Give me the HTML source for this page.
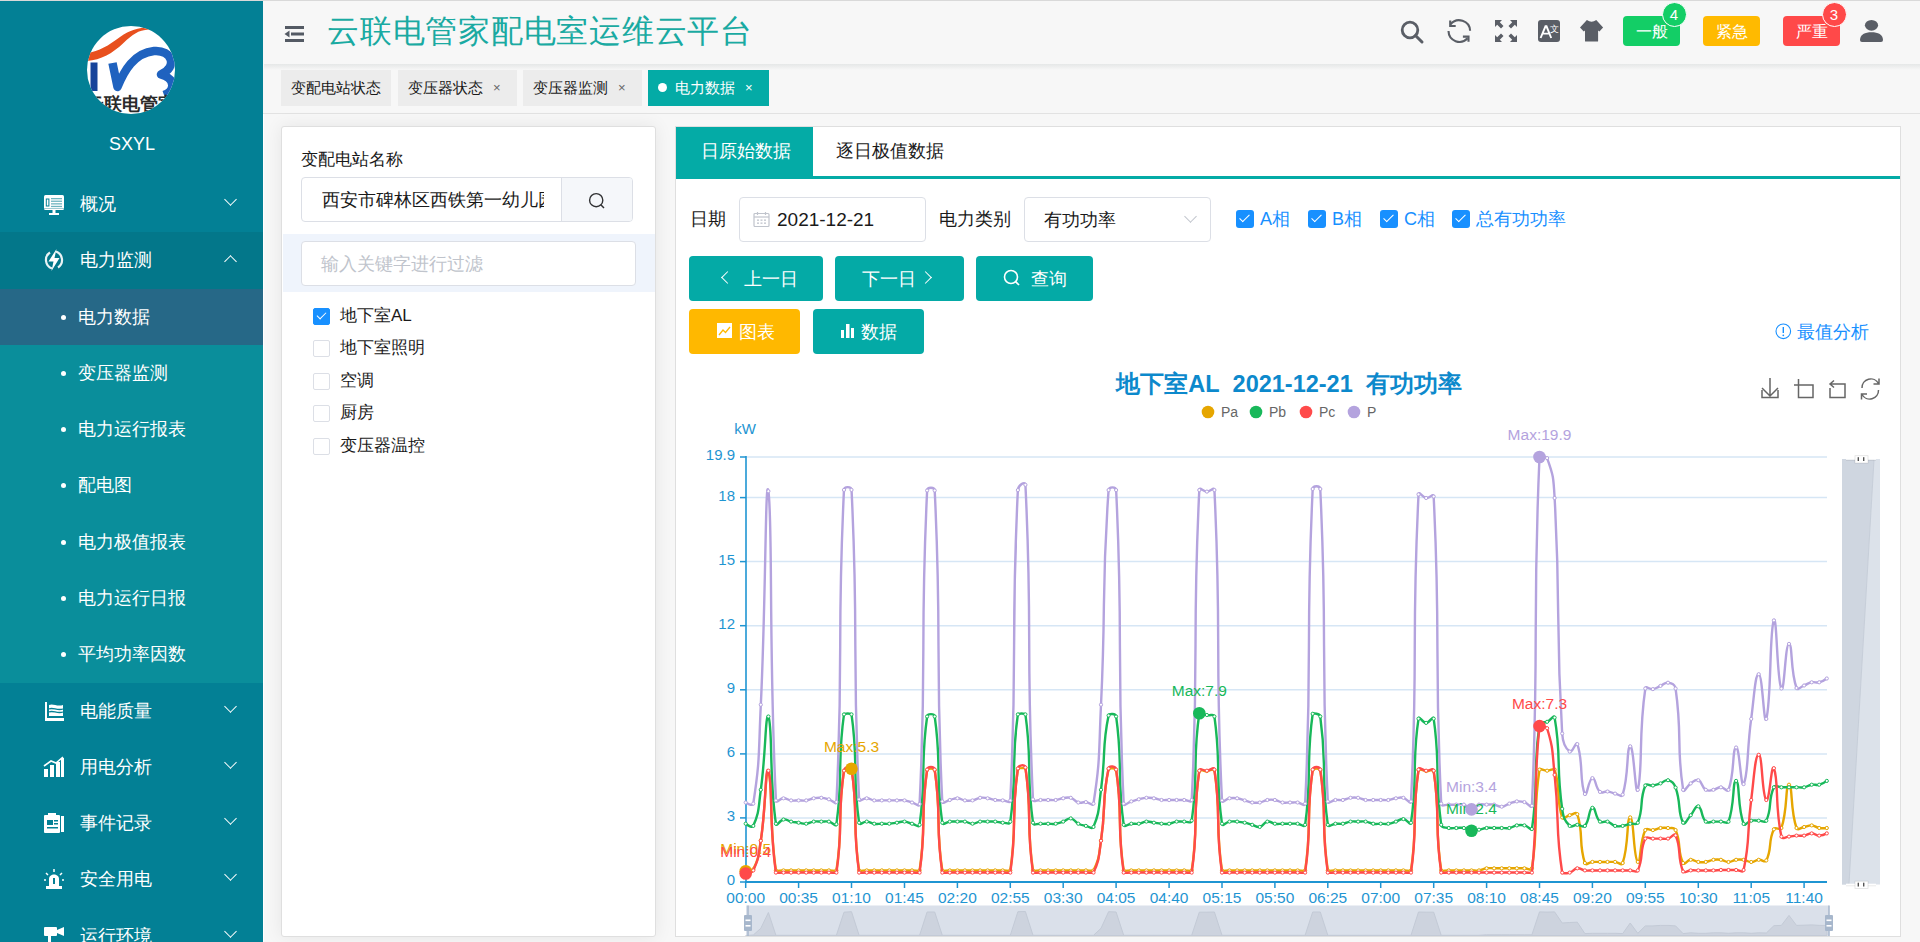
<!DOCTYPE html><html><head><meta charset="utf-8"><style>
*{box-sizing:border-box;margin:0;padding:0}
html,body{width:1920px;height:942px;overflow:hidden}
body{position:relative;background:#f7f7f7;font-family:"Liberation Sans",sans-serif;color:#303133}
.a{position:absolute}
.t{position:absolute;white-space:nowrap;line-height:1}
#side{left:0;top:0;width:263px;height:942px;background:#038095}
.mi{position:absolute;left:0;width:263px;height:56.3px;color:#fff;font-size:18px}
.mi .lbl{position:absolute;left:80px;top:18px;line-height:20px}
.mi .chev{position:absolute;left:226px;top:19px;width:9px;height:9px;border-right:1.8px solid #fff;border-bottom:1.8px solid #fff;transform:rotate(45deg)}
.mi .chev.up{transform:rotate(-135deg);top:25px}
.sub .lbl{left:78px}
.sub .dot{position:absolute;left:61px;top:26px;width:5px;height:5px;border-radius:50%;background:#fff}
#hdr{left:263px;top:0;width:1657px;height:64px;background:#f7f7f7}
#hdrline{left:0;top:0;width:1920px;height:1px;background:#d9d9d9;z-index:5}
#tags{left:263px;top:64px;width:1657px;height:50px;background:#f7f7f7;border-bottom:1px solid #e2e2e2}
#hshadow{left:264px;top:64px;width:1656px;height:6px;background:linear-gradient(#e5e7e7,#f7f7f7)}
.tag{position:absolute;top:5px;height:37px;background:#ececec;font-size:15px;color:#1a1a1a}
.tag .tx{position:absolute;top:10px;line-height:17px}
.tag .x{position:absolute;top:10px;font-size:13px;color:#666;line-height:17px}
.panel{position:absolute;background:#fff;border:1px solid #dfdfdf;border-radius:3px}
.inp{position:absolute;border:1px solid #dcdfe6;border-radius:4px;background:#fff}
.btn{position:absolute;height:45px;border-radius:4px;background:#04aaa6;color:#fff;font-size:18px}
.btn .tx{position:absolute;top:13px;line-height:20px;white-space:nowrap}
.cb{position:absolute;top:210px;width:18px;height:18px;background:#1890ff;border-radius:3px}
.cb:after{content:"";position:absolute;left:6px;top:2px;width:4px;height:9px;border-right:1.6px solid #fff;border-bottom:1.6px solid #fff;transform:rotate(45deg)}
.cbl{position:absolute;top:209px;font-size:18px;color:#1890ff;line-height:20px;white-space:nowrap}
.tcb{position:absolute;left:313px;width:17px;height:17px;border:1px solid #dcdfe6;border-radius:2px;background:#fff}
.tcbl{position:absolute;left:340px;font-size:17px;color:#1a1a1a;line-height:20px;white-space:nowrap}
</style></head><body><div id="side" class="a">
<svg class="a" style="left:86px;top:25px" width="90" height="90" viewBox="0 0 90 90">
<defs><clipPath id="lc"><circle cx="45" cy="45" r="44"/></clipPath></defs>
<circle cx="45" cy="45" r="44" fill="#fff"/>
<g clip-path="url(#lc)">
<path d="M-1 28.5 C 12 27, 22 21, 34 12 C 44 5, 52 2.5, 63 2.5 L 63 4.5 C 52 5, 46 10, 38 17.5 C 26 29, 14 35.5, -1 36 Z" fill="#e8501e"/>
<rect x="4.5" y="37.5" width="7" height="28.5" fill="#17449a"/>
<path d="M26.5 38 L 31.5 62 C 38 46, 48 28, 68 26 C 86 24.5, 92 42, 75 49.5 C 90 54, 89 66, 78 70" fill="none" stroke="#1f62bf" stroke-width="8.5" stroke-linejoin="round"/>
<text x="45" y="85" text-anchor="middle" font-size="18" font-weight="bold" fill="#2a2a2a">云联电管家</text>
</g></svg>
<div class="t" style="left:109px;top:135px;font-size:18px;color:#fff">SXYL</div>
<div class="mi" style="top:176px;"><svg class="a" style="left:43px;top:18px" width="22" height="22" viewBox="0 0 22 22"><rect x="1" y="1" width="20" height="15" rx="1.5" fill="#fff"/><rect x="3.3" y="5" width="2.6" height="7" fill="none" stroke="#038095" stroke-width="1"/><g fill="#6fb5c0"><rect x="8" y="4" width="11" height="1.3"/><rect x="8" y="6.6" width="11" height="1.3"/><rect x="8" y="9.2" width="11" height="1.3"/><rect x="8" y="11.8" width="11" height="1.3"/></g><rect x="1" y="14" width="20" height="1" fill="#9fcbd2"/><rect x="9.5" y="16" width="3" height="3" fill="#fff"/><rect x="6" y="19" width="10" height="2" fill="#fff"/></svg><span class="lbl">概况</span><i class="chev"></i></div>
<div class="mi" style="top:232.28px;background:#03778a;"><svg class="a" style="left:43px;top:16px" width="22" height="24" viewBox="0 0 22 24"><path d="M7 4.5 A 9 9 0 0 0 9 20.5 M15 19.5 A 9 9 0 0 0 13 3.5" fill="none" stroke="#e9f3f5" stroke-width="2.2"/><path d="M13.5 1 L5.5 13.5 L10.5 13.5 L8.5 23 L16.5 10 L11.5 10 Z" fill="#fff"/></svg><span class="lbl">电力监测</span><i class="chev up"></i></div>
<div class="a" style="left:0;top:288.56px;width:263px;height:393.96px;background:#0a8e9b"></div>
<div class="mi sub" style="top:288.56px;background:#266887;"><i class="dot"></i><span class="lbl">电力数据</span></div>
<div class="mi sub" style="top:344.84px;"><i class="dot"></i><span class="lbl">变压器监测</span></div>
<div class="mi sub" style="top:401.12px;"><i class="dot"></i><span class="lbl">电力运行报表</span></div>
<div class="mi sub" style="top:457.40px;"><i class="dot"></i><span class="lbl">配电图</span></div>
<div class="mi sub" style="top:513.68px;"><i class="dot"></i><span class="lbl">电力极值报表</span></div>
<div class="mi sub" style="top:569.96px;"><i class="dot"></i><span class="lbl">电力运行日报</span></div>
<div class="mi sub" style="top:626.24px;"><i class="dot"></i><span class="lbl">平均功率因数</span></div>
<div class="mi" style="top:682.52px;"><svg class="a" style="left:43px;top:17px" width="22" height="22" viewBox="0 0 22 22"><path d="M2 2 L4 2 L4 18 L21 18 L21 21 L2 21 Z" fill="#fff"/><path d="M6 5 C 10 3, 14 7, 20 5 L 20 16 L 6 16 Z" fill="#fff"/><path d="M6 9 C 10 7, 14 11, 20 9 M6 12 C 10 10, 14 14, 20 12" stroke="#038095" stroke-width="1.3" fill="none"/></svg><span class="lbl">电能质量</span><i class="chev"></i></div>
<div class="mi" style="top:738.80px;"><svg class="a" style="left:43px;top:17px" width="22" height="22" viewBox="0 0 22 22"><rect x="1" y="13" width="4" height="8" fill="#fff"/><rect x="7" y="9" width="4" height="12" fill="#fff"/><rect x="13" y="6" width="4" height="15" fill="#fff"/><rect x="18" y="2" width="3" height="19" fill="#fff"/><path d="M1 10 L8 5 L13 7 L20 1" stroke="#fff" stroke-width="1.6" fill="none"/></svg><span class="lbl">用电分析</span><i class="chev"></i></div>
<div class="mi" style="top:795.08px;"><svg class="a" style="left:43px;top:17px" width="22" height="22" viewBox="0 0 22 22"><rect x="1" y="3" width="16" height="18" rx="1" fill="#fff"/><rect x="5" y="1" width="8" height="4" fill="#fff"/><rect x="4" y="8" width="6" height="5" fill="#038095"/><rect x="11" y="8" width="4" height="1.5" fill="#038095"/><rect x="11" y="11" width="4" height="1.5" fill="#038095"/><rect x="4" y="15" width="11" height="1.5" fill="#038095"/><rect x="18" y="4" width="3" height="16" fill="#fff"/></svg><span class="lbl">事件记录</span><i class="chev"></i></div>
<div class="mi" style="top:851.36px;"><svg class="a" style="left:43px;top:17px" width="22" height="22" viewBox="0 0 22 22"><path d="M6 18 L6 11 C 6 5, 16 5, 16 11 L16 18 Z" fill="#fff"/><rect x="3" y="18" width="16" height="3" fill="#fff"/><path d="M10 10 L12 10 L12 16 L10 16Z" fill="#038095"/><path d="M11 1 L11 4 M3 5 L5 7 M19 5 L17 7 M1 12 L3 12 M19 12 L21 12" stroke="#fff" stroke-width="1.5"/></svg><span class="lbl">安全用电</span><i class="chev"></i></div>
<div class="mi" style="top:907.64px;"><svg class="a" style="left:43px;top:17px" width="22" height="22" viewBox="0 0 22 22"><rect x="1" y="2" width="13" height="9" rx="1" fill="#fff"/><path d="M14 5 L21 2 L21 11 L14 8 Z" fill="#fff"/><rect x="5" y="11" width="3" height="10" fill="#fff"/></svg><span class="lbl">运行环境</span><i class="chev"></i></div>
</div>
<div class="a" style="left:263px;top:0;width:1px;height:942px;background:#fff"></div>
<div id="hdr" class="a">
<svg class="a" style="left:21px;top:25px" width="21" height="18" viewBox="0 0 21 18"><rect x="1" y="1" width="19" height="3" fill="#545a64"/><rect x="7" y="7.5" width="13" height="3" fill="#545a64"/><path d="M0.5 9 L5.5 5.5 L5.5 12.5 Z" fill="#545a64"/><rect x="1" y="14" width="19" height="3" fill="#545a64"/></svg>
<div class="t" style="left:64px;top:15px;font-size:32px;color:#1aaaa2;letter-spacing:0.75px">云联电管家配电室运维云平台</div>
<svg class="a" style="left:1137px;top:20px" width="25" height="25" viewBox="0 0 25 25"><circle cx="10" cy="10" r="7.8" fill="none" stroke="#5a5e66" stroke-width="2.8"/><path d="M15.5 15.5 L22 22" stroke="#5a5e66" stroke-width="3" stroke-linecap="round"/></svg>
<svg class="a" style="left:1177px;top:12px" width="40" height="40" viewBox="0 0 40 40"><g fill="none" stroke="#5a5e66" stroke-width="2.1"><path d="M10.6 12.3 A 11 11 0 0 1 30.1 18.7"/><path d="M10.2 8.5 V14 H15.7"/><path d="M8.5 19.1 A 11 11 0 0 0 27.6 26.3"/><path d="M22.9 24.6 H28.5 V29.7"/></g></svg>
<svg class="a" style="left:1231px;top:19px" width="24" height="24" viewBox="0 0 24 24"><g fill="#5a5e66"><path d="M1 1 L8 1 L5.8 3.2 L9.5 7 L7 9.5 L3.2 5.8 L1 8Z"/><path d="M23 1 L16 1 L18.2 3.2 L14.5 7 L17 9.5 L20.8 5.8 L23 8Z"/><path d="M1 23 L8 23 L5.8 20.8 L9.5 17 L7 14.5 L3.2 18.2 L1 16Z"/><path d="M23 23 L16 23 L18.2 20.8 L14.5 17 L17 14.5 L20.8 18.2 L23 16Z"/></g></svg>
<svg class="a" style="left:1275px;top:20px" width="23" height="23" viewBox="0 0 23 23"><rect x="0" y="0" width="22" height="22" rx="3" fill="#5a5e66"/><path d="M2.6 18 L7.5 6.3 L8.5 6.3 L13.2 18 M4.6 13.6 L11.4 13.6" fill="none" stroke="#fff" stroke-width="1.9"/><text x="12.3" y="11.8" font-size="8.5" fill="#fff">文</text></svg>
<svg class="a" style="left:1316px;top:19px" width="25" height="24" viewBox="0 0 25 24"><path d="M7.9 0.9 Q12.6 4.5 17.25 0.9 L24.1 8.4 L20.4 12.5 L19.1 11.5 L19.1 22 Q19.1 22.5 18.6 22.5 L6.5 22.5 Q6 22.5 6 22 L6 11.5 L4.75 12.5 L1 8.4 Z" fill="#5a5e66"/></svg>
<div class="a" style="left:1360px;top:16px;width:57px;height:30px;border-radius:4px;background:#13ce66"><div class="t" style="left:0;width:57px;text-align:center;top:7px;font-size:16px;line-height:18px;color:#fff">一般</div></div>
<div class="a" style="left:1399px;top:2px;width:25px;height:25px;border-radius:50%;background:#13ce66;border:1.5px solid #fff"><div class="t" style="left:0;width:22px;text-align:center;top:3px;font-size:15px;line-height:17px;color:#fff">4</div></div>
<div class="a" style="left:1440px;top:16px;width:57px;height:30px;border-radius:4px;background:#ffba00"><div class="t" style="left:0;width:57px;text-align:center;top:7px;font-size:16px;line-height:18px;color:#fff">紧急</div></div>
<div class="a" style="left:1520px;top:16px;width:57px;height:30px;border-radius:4px;background:#ff4949"><div class="t" style="left:0;width:57px;text-align:center;top:7px;font-size:16px;line-height:18px;color:#fff">严重</div></div>
<div class="a" style="left:1559px;top:2px;width:25px;height:25px;border-radius:50%;background:#ff4949;border:1.5px solid #fff"><div class="t" style="left:0;width:22px;text-align:center;top:3px;font-size:15px;line-height:17px;color:#fff">3</div></div>
<svg class="a" style="left:1596px;top:19px" width="25" height="24" viewBox="0 0 25 24"><ellipse cx="12.5" cy="6.3" rx="6.6" ry="5.4" fill="#5a5e66"/><path d="M1 21 C 1 15.5, 6 13.2, 12.5 13.2 C 19 13.2, 24 15.5, 24 21 Q 24 23 22 23 L 3 23 Q 1 23 1 21 Z" fill="#5a5e66"/></svg>
</div>
<div id="hdrline" class="a"></div>
<div id="tags" class="a">
<div class="tag" style="left:18px;width:110px"><span class="tx" style="left:10px">变配电站状态</span></div>
<div class="tag" style="left:135px;width:119px"><span class="tx" style="left:10px">变压器状态</span><span class="x" style="left:95px">×</span></div>
<div class="tag" style="left:260px;width:119px"><span class="tx" style="left:10px">变压器监测</span><span class="x" style="left:95px">×</span></div>
<div class="tag" style="left:385px;width:121px;background:#04aba6;color:#fff"><i class="a" style="left:10px;top:14px;width:9px;height:9px;border-radius:50%;background:#fff"></i><span class="tx" style="left:27px">电力数据</span><span class="x" style="left:97px;color:#fff">×</span></div>
</div>
<div id="hshadow" class="a"></div>
<div class="panel" style="left:281px;top:126px;width:375px;height:811px;box-shadow:0 0 18px rgba(0,0,0,.075)"></div>
<div class="t" style="left:301px;top:150px;font-size:17px;line-height:20px;color:#1a1a1a">变配电站名称</div>
<div class="inp" style="left:301px;top:177px;width:332px;height:45px;overflow:hidden"><div class="t" style="left:20px;top:12px;font-size:18px;line-height:20px;color:#1a1a1a;width:222px;overflow:hidden">西安市碑林区西铁第一幼儿园</div><div class="a" style="left:259px;top:0;width:72px;height:43px;background:#f5f7fa;border-left:1px solid #dcdfe6"></div><svg class="a" style="left:286px;top:14px" width="18" height="18" viewBox="0 0 18 18"><circle cx="8.2" cy="8.2" r="6.6" fill="none" stroke="#303133" stroke-width="1.4"/><path d="M12.8 12.8 L16 16" stroke="#303133" stroke-width="1.5"/></svg></div>
<div class="a" style="left:283px;top:234px;width:372px;height:58px;background:#eff4fc"></div>
<div class="inp" style="left:301px;top:241px;width:335px;height:45px"><div class="t" style="left:19px;top:12px;font-size:18px;line-height:20px;color:#c0c4cc">输入关键字进行过滤</div></div>
<div class="tcb" style="top:307.5px;background:#1890ff;border-color:#1890ff"><i class="a" style="left:5px;top:1.5px;width:5px;height:9px;border-right:1.5px solid #fff;border-bottom:1.5px solid #fff;transform:rotate(45deg)"></i></div>
<div class="tcbl" style="top:305.5px">地下室AL</div>
<div class="tcb" style="top:340.0px"></div>
<div class="tcbl" style="top:338.0px">地下室照明</div>
<div class="tcb" style="top:372.5px"></div>
<div class="tcbl" style="top:370.5px">空调</div>
<div class="tcb" style="top:405.0px"></div>
<div class="tcbl" style="top:403.0px">厨房</div>
<div class="tcb" style="top:437.5px"></div>
<div class="tcbl" style="top:435.5px">变压器温控</div>
<div class="panel" style="left:675px;top:126px;width:1226px;height:811px;border-radius:0"></div>
<div class="a" style="left:676px;top:127px;width:137px;height:50px;background:#04aba6"></div>
<div class="a" style="left:676px;top:176px;width:1224px;height:3px;background:#04aba6"></div>
<div class="t" style="left:701px;top:141px;font-size:18px;line-height:20px;color:#fff">日原始数据</div>
<div class="t" style="left:836px;top:141px;font-size:18px;line-height:20px;color:#1a1a1a">逐日极值数据</div>
<div class="t" style="left:690px;top:209px;font-size:18px;line-height:20px;color:#1a1a1a">日期</div>
<div class="inp" style="left:739px;top:197px;width:187px;height:45px"><svg class="a" style="left:13px;top:13px" width="17" height="17" viewBox="0 0 17 17"><rect x="1" y="2.5" width="15" height="13" rx="1" fill="none" stroke="#c0c4cc" stroke-width="1.2"/><path d="M1 6 L16 6" stroke="#c0c4cc" stroke-width="1.2"/><path d="M4.5 1 V4 M12.5 1 V4" stroke="#c0c4cc" stroke-width="1.2"/><g fill="#c0c4cc"><rect x="4" y="8.5" width="2" height="1.3"/><rect x="7.5" y="8.5" width="2" height="1.3"/><rect x="11" y="8.5" width="2" height="1.3"/><rect x="4" y="11.5" width="2" height="1.3"/><rect x="7.5" y="11.5" width="2" height="1.3"/><rect x="11" y="11.5" width="2" height="1.3"/></g></svg><div class="t" style="left:37px;top:11px;font-size:19px;line-height:22px;color:#1a1a1a">2021-12-21</div></div>
<div class="t" style="left:939px;top:209px;font-size:18px;line-height:20px;color:#1a1a1a">电力类别</div>
<div class="inp" style="left:1024px;top:197px;width:187px;height:45px"><div class="t" style="left:19px;top:12px;font-size:18px;line-height:20px;color:#1a1a1a">有功功率</div><i class="a" style="left:161px;top:14px;width:9px;height:9px;border-right:1.2px solid #c0c4cc;border-bottom:1.2px solid #c0c4cc;transform:rotate(45deg)"></i></div>
<div class="cb" style="left:1236px"></div><div class="cbl" style="left:1260px">A相</div>
<div class="cb" style="left:1308px"></div><div class="cbl" style="left:1332px">B相</div>
<div class="cb" style="left:1380px"></div><div class="cbl" style="left:1404px">C相</div>
<div class="cb" style="left:1452px"></div><div class="cbl" style="left:1476px">总有功功率</div>
<div class="btn" style="left:689px;top:256px;width:134px"><i class="a" style="left:34px;top:17px;width:9px;height:9px;border-left:1.6px solid #fff;border-bottom:1.6px solid #fff;transform:rotate(45deg)"></i><span class="tx" style="left:55px">上一日</span></div>
<div class="btn" style="left:835px;top:256px;width:129px"><span class="tx" style="left:27px">下一日</span><i class="a" style="left:86px;top:17px;width:9px;height:9px;border-right:1.6px solid #fff;border-top:1.6px solid #fff;transform:rotate(45deg)"></i></div>
<div class="btn" style="left:976px;top:256px;width:117px"><svg class="a" style="left:27px;top:13px" width="18" height="18" viewBox="0 0 18 18"><circle cx="8" cy="8" r="6.5" fill="none" stroke="#fff" stroke-width="1.6"/><path d="M12.6 12.6 L16 16" stroke="#fff" stroke-width="1.7"/></svg><span class="tx" style="left:55px">查询</span></div>
<div class="btn" style="left:689px;top:309px;width:111px;background:#ffb800"><svg class="a" style="left:28px;top:14px" width="16" height="16" viewBox="0 0 16 16"><rect x="0" y="0" width="15" height="15" fill="#fff"/><path d="M2 12 L6 7 L8.5 9.5 L13 4" stroke="#ffb800" stroke-width="1.3" fill="none"/></svg><span class="tx" style="left:50px">图表</span></div>
<div class="btn" style="left:813px;top:309px;width:111px"><svg class="a" style="left:27px;top:14px" width="16" height="16" viewBox="0 0 16 16"><rect x="1" y="7" width="3" height="8" fill="#fff"/><rect x="6" y="1" width="3.5" height="14" fill="#fff"/><rect x="11" y="5" width="3" height="10" fill="#fff"/></svg><span class="tx" style="left:48px">数据</span></div>
<svg class="a" style="left:1775px;top:323px" width="17" height="17" viewBox="0 0 17 17"><circle cx="8.3" cy="8.3" r="7.3" fill="none" stroke="#1890ff" stroke-width="1.1"/><path d="M8.3 4 V10" stroke="#1890ff" stroke-width="1.4"/><circle cx="8.3" cy="12.3" r="0.9" fill="#1890ff"/></svg>
<div class="t" style="left:1797px;top:322px;font-size:18px;line-height:20px;color:#1890ff">最值分析</div>
<svg class="a" style="left:0;top:0" width="1920" height="942" viewBox="0 0 1920 942"><text x="1289" y="392" text-anchor="middle" font-size="23.5" font-weight="bold" fill="#0c89cc" font-family="Liberation Sans">地下室AL&#160;&#160;2021-12-21&#160;&#160;有功功率</text><circle cx="1208" cy="412" r="6.3" fill="#e6a600"/><text x="1221" y="417" font-size="14" fill="#666" font-family="Liberation Sans">Pa</text><circle cx="1256" cy="412" r="6.3" fill="#18b85a"/><text x="1269" y="417" font-size="14" fill="#666" font-family="Liberation Sans">Pb</text><circle cx="1306" cy="412" r="6.3" fill="#ff4a4a"/><text x="1319" y="417" font-size="14" fill="#666" font-family="Liberation Sans">Pc</text><circle cx="1354" cy="412" r="6.3" fill="#b4a3de"/><text x="1367" y="417" font-size="14" fill="#666" font-family="Liberation Sans">P</text><g fill="none" stroke="#666" stroke-width="1.5"><path d="M1770 378 V396 M1762 388 L1770 396 L1778 388 M1762 390 V397.5 H1778 V390"/><path d="M1794 385 H1813 V397.5 H1798.5 V379"/><path d="M1831 384 H1845 V397.5 H1830 V388 M1834 380.5 L1830 384 L1834 387.5"/><path d="M1862 388 A 8.8 8.8 0 0 1 1878.5 383.5 M1878.5 390 A 8.8 8.8 0 0 1 1862 394.5 M1879 378.5 V384 H1873.5 M1861.5 399.5 V394 H1867"/></g><line x1="746" y1="817.9" x2="1827" y2="817.9" stroke="#d6e6f5" stroke-width="1.5"/><line x1="746" y1="753.9" x2="1827" y2="753.9" stroke="#d6e6f5" stroke-width="1.5"/><line x1="746" y1="689.8" x2="1827" y2="689.8" stroke="#d6e6f5" stroke-width="1.5"/><line x1="746" y1="625.7" x2="1827" y2="625.7" stroke="#d6e6f5" stroke-width="1.5"/><line x1="746" y1="561.6" x2="1827" y2="561.6" stroke="#d6e6f5" stroke-width="1.5"/><line x1="746" y1="497.6" x2="1827" y2="497.6" stroke="#d6e6f5" stroke-width="1.5"/><line x1="746" y1="457.0" x2="1827" y2="457.0" stroke="#d6e6f5" stroke-width="1.5"/><line x1="746" y1="456" x2="746" y2="883" stroke="#1f95d2" stroke-width="1.6"/><line x1="740" y1="882.0" x2="746" y2="882.0" stroke="#1f95d2" stroke-width="1.5"/><text x="735" y="885.0" text-anchor="end" font-size="15" fill="#1f95d2" font-family="Liberation Sans">0</text><line x1="740" y1="817.9" x2="746" y2="817.9" stroke="#1f95d2" stroke-width="1.5"/><text x="735" y="820.9" text-anchor="end" font-size="15" fill="#1f95d2" font-family="Liberation Sans">3</text><line x1="740" y1="753.9" x2="746" y2="753.9" stroke="#1f95d2" stroke-width="1.5"/><text x="735" y="756.9" text-anchor="end" font-size="15" fill="#1f95d2" font-family="Liberation Sans">6</text><line x1="740" y1="689.8" x2="746" y2="689.8" stroke="#1f95d2" stroke-width="1.5"/><text x="735" y="692.8" text-anchor="end" font-size="15" fill="#1f95d2" font-family="Liberation Sans">9</text><line x1="740" y1="625.7" x2="746" y2="625.7" stroke="#1f95d2" stroke-width="1.5"/><text x="735" y="628.7" text-anchor="end" font-size="15" fill="#1f95d2" font-family="Liberation Sans">12</text><line x1="740" y1="561.6" x2="746" y2="561.6" stroke="#1f95d2" stroke-width="1.5"/><text x="735" y="564.6" text-anchor="end" font-size="15" fill="#1f95d2" font-family="Liberation Sans">15</text><line x1="740" y1="497.6" x2="746" y2="497.6" stroke="#1f95d2" stroke-width="1.5"/><text x="735" y="500.6" text-anchor="end" font-size="15" fill="#1f95d2" font-family="Liberation Sans">18</text><line x1="740" y1="457.0" x2="746" y2="457.0" stroke="#1f95d2" stroke-width="1.5"/><text x="735" y="460.0" text-anchor="end" font-size="15" fill="#1f95d2" font-family="Liberation Sans">19.9</text><text x="745" y="434" text-anchor="middle" font-size="15" fill="#1f95d2" font-family="Liberation Sans">kW</text><line x1="745" y1="882" x2="1827" y2="882" stroke="#1f95d2" stroke-width="2"/><line x1="745.7" y1="882" x2="745.7" y2="888" stroke="#1f95d2" stroke-width="1.5"/><text x="745.7" y="903" text-anchor="middle" font-size="15.5" fill="#1f95d2" font-family="Liberation Sans">00:00</text><line x1="798.6" y1="882" x2="798.6" y2="888" stroke="#1f95d2" stroke-width="1.5"/><text x="798.6" y="903" text-anchor="middle" font-size="15.5" fill="#1f95d2" font-family="Liberation Sans">00:35</text><line x1="851.5" y1="882" x2="851.5" y2="888" stroke="#1f95d2" stroke-width="1.5"/><text x="851.5" y="903" text-anchor="middle" font-size="15.5" fill="#1f95d2" font-family="Liberation Sans">01:10</text><line x1="904.5" y1="882" x2="904.5" y2="888" stroke="#1f95d2" stroke-width="1.5"/><text x="904.5" y="903" text-anchor="middle" font-size="15.5" fill="#1f95d2" font-family="Liberation Sans">01:45</text><line x1="957.4" y1="882" x2="957.4" y2="888" stroke="#1f95d2" stroke-width="1.5"/><text x="957.4" y="903" text-anchor="middle" font-size="15.5" fill="#1f95d2" font-family="Liberation Sans">02:20</text><line x1="1010.3" y1="882" x2="1010.3" y2="888" stroke="#1f95d2" stroke-width="1.5"/><text x="1010.3" y="903" text-anchor="middle" font-size="15.5" fill="#1f95d2" font-family="Liberation Sans">02:55</text><line x1="1063.2" y1="882" x2="1063.2" y2="888" stroke="#1f95d2" stroke-width="1.5"/><text x="1063.2" y="903" text-anchor="middle" font-size="15.5" fill="#1f95d2" font-family="Liberation Sans">03:30</text><line x1="1116.1" y1="882" x2="1116.1" y2="888" stroke="#1f95d2" stroke-width="1.5"/><text x="1116.1" y="903" text-anchor="middle" font-size="15.5" fill="#1f95d2" font-family="Liberation Sans">04:05</text><line x1="1169.1" y1="882" x2="1169.1" y2="888" stroke="#1f95d2" stroke-width="1.5"/><text x="1169.1" y="903" text-anchor="middle" font-size="15.5" fill="#1f95d2" font-family="Liberation Sans">04:40</text><line x1="1222.0" y1="882" x2="1222.0" y2="888" stroke="#1f95d2" stroke-width="1.5"/><text x="1222.0" y="903" text-anchor="middle" font-size="15.5" fill="#1f95d2" font-family="Liberation Sans">05:15</text><line x1="1274.9" y1="882" x2="1274.9" y2="888" stroke="#1f95d2" stroke-width="1.5"/><text x="1274.9" y="903" text-anchor="middle" font-size="15.5" fill="#1f95d2" font-family="Liberation Sans">05:50</text><line x1="1327.8" y1="882" x2="1327.8" y2="888" stroke="#1f95d2" stroke-width="1.5"/><text x="1327.8" y="903" text-anchor="middle" font-size="15.5" fill="#1f95d2" font-family="Liberation Sans">06:25</text><line x1="1380.7" y1="882" x2="1380.7" y2="888" stroke="#1f95d2" stroke-width="1.5"/><text x="1380.7" y="903" text-anchor="middle" font-size="15.5" fill="#1f95d2" font-family="Liberation Sans">07:00</text><line x1="1433.7" y1="882" x2="1433.7" y2="888" stroke="#1f95d2" stroke-width="1.5"/><text x="1433.7" y="903" text-anchor="middle" font-size="15.5" fill="#1f95d2" font-family="Liberation Sans">07:35</text><line x1="1486.6" y1="882" x2="1486.6" y2="888" stroke="#1f95d2" stroke-width="1.5"/><text x="1486.6" y="903" text-anchor="middle" font-size="15.5" fill="#1f95d2" font-family="Liberation Sans">08:10</text><line x1="1539.5" y1="882" x2="1539.5" y2="888" stroke="#1f95d2" stroke-width="1.5"/><text x="1539.5" y="903" text-anchor="middle" font-size="15.5" fill="#1f95d2" font-family="Liberation Sans">08:45</text><line x1="1592.4" y1="882" x2="1592.4" y2="888" stroke="#1f95d2" stroke-width="1.5"/><text x="1592.4" y="903" text-anchor="middle" font-size="15.5" fill="#1f95d2" font-family="Liberation Sans">09:20</text><line x1="1645.3" y1="882" x2="1645.3" y2="888" stroke="#1f95d2" stroke-width="1.5"/><text x="1645.3" y="903" text-anchor="middle" font-size="15.5" fill="#1f95d2" font-family="Liberation Sans">09:55</text><line x1="1698.3" y1="882" x2="1698.3" y2="888" stroke="#1f95d2" stroke-width="1.5"/><text x="1698.3" y="903" text-anchor="middle" font-size="15.5" fill="#1f95d2" font-family="Liberation Sans">10:30</text><line x1="1751.2" y1="882" x2="1751.2" y2="888" stroke="#1f95d2" stroke-width="1.5"/><text x="1751.2" y="903" text-anchor="middle" font-size="15.5" fill="#1f95d2" font-family="Liberation Sans">11:05</text><line x1="1804.1" y1="882" x2="1804.1" y2="888" stroke="#1f95d2" stroke-width="1.5"/><text x="1804.1" y="903" text-anchor="middle" font-size="15.5" fill="#1f95d2" font-family="Liberation Sans">11:40</text><path d="M745.70 871.32C745.70 871.32 751.70 871.32 753.26 869.37C759.26 857.08 758.52 855.13 760.82 840.35C766.08 806.46 765.28 767.91 768.38 772.01C772.84 780.87 768.92 824.72 775.94 870.43C776.48 871.32 779.72 870.43 783.50 870.43C787.28 870.43 787.28 870.43 791.06 870.43C794.84 870.43 794.84 870.43 798.62 870.43C802.40 870.43 802.40 870.43 806.18 870.43C809.96 870.43 809.96 870.43 813.74 870.43C817.52 870.43 817.52 870.43 821.30 870.43C825.08 870.43 825.08 870.43 828.86 870.43C832.64 870.43 835.89 871.32 836.42 870.43C843.45 824.19 836.97 818.05 843.98 770.94C844.53 767.91 851.00 767.91 851.54 768.81C858.56 814.99 852.06 823.13 859.10 870.43C859.62 871.32 862.88 870.43 866.66 870.43C870.44 870.43 870.44 870.43 874.22 870.43C878.00 870.43 878.00 870.43 881.78 870.43C885.56 870.43 885.56 870.43 889.34 870.43C893.12 870.43 893.12 870.43 896.90 870.43C900.68 870.43 900.68 870.43 904.46 870.43C908.24 870.43 908.24 870.43 912.02 870.43C915.80 870.43 919.05 871.32 919.58 870.43C926.61 823.73 920.11 816.72 927.14 770.03C927.67 767.91 934.17 767.91 934.70 770.03C941.73 816.72 935.23 823.73 942.26 870.43C942.79 871.32 946.04 870.43 949.82 870.43C953.60 870.43 953.60 870.43 957.38 870.43C961.16 870.43 961.16 870.43 964.94 870.43C968.72 870.43 968.72 870.43 972.50 870.43C976.28 870.43 976.28 870.43 980.06 870.43C983.84 870.43 983.84 870.43 987.62 870.43C991.40 870.43 991.40 870.43 995.18 870.43C998.96 870.43 998.96 870.43 1002.74 870.43C1006.52 870.43 1009.78 871.32 1010.30 870.43C1017.34 823.21 1010.83 816.65 1017.86 768.97C1018.39 767.91 1024.90 767.91 1025.42 767.91C1032.46 815.13 1025.94 822.68 1032.98 870.43C1033.50 871.32 1036.76 870.43 1040.54 870.43C1044.32 870.43 1044.32 870.43 1048.10 870.43C1051.88 870.43 1051.88 870.43 1055.66 870.43C1059.44 870.43 1059.44 870.43 1063.22 870.43C1067.00 870.43 1067.00 870.43 1070.78 870.43C1074.56 870.43 1074.56 870.43 1078.34 870.43C1082.12 870.43 1082.12 870.43 1085.90 870.43C1089.68 870.43 1091.98 871.32 1093.46 870.43C1099.54 858.34 1098.74 855.66 1101.02 840.35C1106.30 804.93 1101.75 800.75 1108.58 768.97C1109.31 767.91 1115.61 767.91 1116.14 770.03C1123.17 817.18 1116.67 823.73 1123.70 870.43C1124.23 871.32 1127.48 870.43 1131.26 870.43C1135.04 870.43 1135.04 870.43 1138.82 870.43C1142.60 870.43 1142.60 870.43 1146.38 870.43C1150.16 870.43 1150.16 870.43 1153.94 870.43C1157.72 870.43 1157.72 870.43 1161.50 870.43C1165.28 870.43 1165.28 870.43 1169.06 870.43C1172.84 870.43 1172.84 870.43 1176.62 870.43C1180.40 870.43 1180.40 870.43 1184.18 870.43C1187.96 870.43 1191.21 871.32 1191.74 870.43C1198.77 824.26 1192.27 817.26 1199.30 771.09C1199.83 767.91 1203.10 771.35 1206.86 771.09C1210.66 770.82 1213.89 767.91 1214.42 770.03C1221.45 816.20 1214.95 823.73 1221.98 870.43C1222.51 871.32 1225.76 870.43 1229.54 870.43C1233.32 870.43 1233.32 870.43 1237.10 870.43C1240.88 870.43 1240.88 870.43 1244.66 870.43C1248.44 870.43 1248.44 870.43 1252.22 870.43C1256.00 870.43 1256.00 870.43 1259.78 870.43C1263.56 870.43 1263.56 870.43 1267.34 870.43C1271.12 870.43 1271.12 870.43 1274.90 870.43C1278.68 870.43 1278.68 870.43 1282.46 870.43C1286.24 870.43 1286.24 870.43 1290.02 870.43C1293.80 870.43 1293.80 870.43 1297.58 870.43C1301.36 870.43 1304.61 871.32 1305.14 870.43C1312.17 823.73 1305.67 816.72 1312.70 770.03C1313.23 767.91 1319.73 767.91 1320.26 770.03C1327.29 816.72 1320.79 823.73 1327.82 870.43C1328.35 871.32 1331.60 870.43 1335.38 870.43C1339.16 870.43 1339.16 870.43 1342.94 870.43C1346.72 870.43 1346.72 870.43 1350.50 870.43C1354.28 870.43 1354.28 870.43 1358.06 870.43C1361.84 870.43 1361.84 870.43 1365.62 870.43C1369.40 870.43 1369.40 870.43 1373.18 870.43C1376.96 870.43 1376.96 870.43 1380.74 870.43C1384.52 870.43 1384.52 870.43 1388.30 870.43C1392.08 870.43 1392.08 870.43 1395.86 870.43C1399.64 870.43 1399.64 870.43 1403.42 870.43C1407.20 870.43 1410.45 871.32 1410.98 870.43C1418.01 823.73 1411.51 816.20 1418.54 770.03C1419.07 767.91 1422.30 770.82 1426.10 771.09C1429.86 771.35 1433.13 767.91 1433.66 771.09C1440.69 817.26 1434.19 824.26 1441.22 870.43C1441.75 871.32 1445.00 870.43 1448.78 870.43C1452.56 870.43 1452.56 870.43 1456.34 870.43C1460.12 870.43 1460.12 870.43 1463.90 870.43C1467.68 870.43 1467.68 870.43 1471.46 870.43C1475.24 870.43 1475.31 870.95 1479.02 870.43C1482.87 869.89 1482.73 868.85 1486.58 868.31C1490.29 867.79 1490.36 868.31 1494.14 868.31C1497.92 868.31 1497.92 868.31 1501.70 868.31C1505.48 868.31 1505.48 868.31 1509.26 868.31C1513.04 868.31 1513.04 868.31 1516.82 868.31C1520.60 868.31 1520.60 868.31 1524.38 868.31C1528.16 868.31 1531.40 871.32 1531.94 868.31C1538.96 822.46 1532.48 814.93 1539.50 769.60C1540.04 767.91 1543.28 770.66 1547.06 770.66C1550.84 770.66 1553.59 767.91 1554.62 769.60C1561.15 789.77 1555.68 797.73 1562.18 817.36C1563.24 820.55 1565.91 816.05 1569.74 815.24C1573.47 814.45 1576.29 810.98 1577.30 814.18C1583.85 834.86 1578.31 842.32 1584.86 863.00C1585.87 866.20 1588.62 862.20 1592.42 861.94C1596.18 861.67 1596.20 861.94 1599.98 861.94C1603.76 861.94 1603.76 861.94 1607.54 861.94C1611.32 861.94 1611.34 861.67 1615.10 861.94C1618.90 862.20 1621.59 866.16 1622.66 863.00C1629.15 843.87 1626.40 817.63 1630.22 817.36C1633.96 817.10 1633.39 858.24 1637.78 861.94C1640.95 864.61 1639.20 843.03 1645.34 830.10C1646.76 827.11 1649.19 830.62 1652.90 830.10C1656.75 829.56 1656.61 828.52 1660.46 827.97C1664.17 827.45 1664.31 827.45 1668.02 827.97C1671.87 828.52 1674.15 826.79 1675.58 830.10C1681.71 844.31 1677.06 851.05 1683.14 863.00C1684.62 865.90 1686.84 860.09 1690.70 859.82C1694.40 859.56 1694.41 861.40 1698.26 861.94C1701.97 862.46 1702.11 862.46 1705.82 861.94C1709.67 861.40 1709.53 860.36 1713.38 859.82C1717.09 859.29 1717.24 859.26 1720.94 859.81C1724.80 860.37 1724.72 862.03 1728.50 862.03C1732.28 862.03 1732.20 860.37 1736.06 859.81C1739.76 859.26 1739.92 859.26 1743.62 859.81C1747.48 860.37 1747.40 862.03 1751.18 862.03C1754.96 862.03 1754.89 860.21 1758.74 859.81C1762.45 859.42 1764.85 863.36 1766.30 860.44C1772.41 848.09 1767.76 842.36 1773.86 829.26C1775.32 826.13 1780.30 831.30 1781.42 827.99C1787.86 809.03 1785.20 784.72 1788.98 784.72C1792.76 784.72 1790.10 809.96 1796.54 827.99C1797.66 831.12 1800.35 827.67 1804.10 827.03C1807.91 826.39 1807.94 825.21 1811.66 825.44C1815.50 825.69 1815.34 827.34 1819.22 827.99C1822.90 828.61 1826.78 827.99 1826.78 827.99" fill="none" stroke="#e6a600" stroke-width="2.4" stroke-linejoin="round"/><g fill="#fff" stroke="#e6a600" stroke-width="1"><circle cx="745.7" cy="871.3" r="1.6"/><circle cx="753.3" cy="869.4" r="1.6"/><circle cx="760.8" cy="840.4" r="1.6"/><circle cx="768.4" cy="772.0" r="1.6"/><circle cx="775.9" cy="870.4" r="1.6"/><circle cx="783.5" cy="870.4" r="1.6"/><circle cx="791.1" cy="870.4" r="1.6"/><circle cx="798.6" cy="870.4" r="1.6"/><circle cx="806.2" cy="870.4" r="1.6"/><circle cx="813.7" cy="870.4" r="1.6"/><circle cx="821.3" cy="870.4" r="1.6"/><circle cx="828.9" cy="870.4" r="1.6"/><circle cx="836.4" cy="870.4" r="1.6"/><circle cx="844.0" cy="770.9" r="1.6"/><circle cx="851.5" cy="768.8" r="1.6"/><circle cx="859.1" cy="870.4" r="1.6"/><circle cx="866.7" cy="870.4" r="1.6"/><circle cx="874.2" cy="870.4" r="1.6"/><circle cx="881.8" cy="870.4" r="1.6"/><circle cx="889.3" cy="870.4" r="1.6"/><circle cx="896.9" cy="870.4" r="1.6"/><circle cx="904.5" cy="870.4" r="1.6"/><circle cx="912.0" cy="870.4" r="1.6"/><circle cx="919.6" cy="870.4" r="1.6"/><circle cx="927.1" cy="770.0" r="1.6"/><circle cx="934.7" cy="770.0" r="1.6"/><circle cx="942.3" cy="870.4" r="1.6"/><circle cx="949.8" cy="870.4" r="1.6"/><circle cx="957.4" cy="870.4" r="1.6"/><circle cx="964.9" cy="870.4" r="1.6"/><circle cx="972.5" cy="870.4" r="1.6"/><circle cx="980.1" cy="870.4" r="1.6"/><circle cx="987.6" cy="870.4" r="1.6"/><circle cx="995.2" cy="870.4" r="1.6"/><circle cx="1002.7" cy="870.4" r="1.6"/><circle cx="1010.3" cy="870.4" r="1.6"/><circle cx="1017.9" cy="769.0" r="1.6"/><circle cx="1025.4" cy="767.9" r="1.6"/><circle cx="1033.0" cy="870.4" r="1.6"/><circle cx="1040.5" cy="870.4" r="1.6"/><circle cx="1048.1" cy="870.4" r="1.6"/><circle cx="1055.7" cy="870.4" r="1.6"/><circle cx="1063.2" cy="870.4" r="1.6"/><circle cx="1070.8" cy="870.4" r="1.6"/><circle cx="1078.3" cy="870.4" r="1.6"/><circle cx="1085.9" cy="870.4" r="1.6"/><circle cx="1093.5" cy="870.4" r="1.6"/><circle cx="1101.0" cy="840.4" r="1.6"/><circle cx="1108.6" cy="769.0" r="1.6"/><circle cx="1116.1" cy="770.0" r="1.6"/><circle cx="1123.7" cy="870.4" r="1.6"/><circle cx="1131.3" cy="870.4" r="1.6"/><circle cx="1138.8" cy="870.4" r="1.6"/><circle cx="1146.4" cy="870.4" r="1.6"/><circle cx="1153.9" cy="870.4" r="1.6"/><circle cx="1161.5" cy="870.4" r="1.6"/><circle cx="1169.1" cy="870.4" r="1.6"/><circle cx="1176.6" cy="870.4" r="1.6"/><circle cx="1184.2" cy="870.4" r="1.6"/><circle cx="1191.7" cy="870.4" r="1.6"/><circle cx="1199.3" cy="771.1" r="1.6"/><circle cx="1206.9" cy="771.1" r="1.6"/><circle cx="1214.4" cy="770.0" r="1.6"/><circle cx="1222.0" cy="870.4" r="1.6"/><circle cx="1229.5" cy="870.4" r="1.6"/><circle cx="1237.1" cy="870.4" r="1.6"/><circle cx="1244.7" cy="870.4" r="1.6"/><circle cx="1252.2" cy="870.4" r="1.6"/><circle cx="1259.8" cy="870.4" r="1.6"/><circle cx="1267.3" cy="870.4" r="1.6"/><circle cx="1274.9" cy="870.4" r="1.6"/><circle cx="1282.5" cy="870.4" r="1.6"/><circle cx="1290.0" cy="870.4" r="1.6"/><circle cx="1297.6" cy="870.4" r="1.6"/><circle cx="1305.1" cy="870.4" r="1.6"/><circle cx="1312.7" cy="770.0" r="1.6"/><circle cx="1320.3" cy="770.0" r="1.6"/><circle cx="1327.8" cy="870.4" r="1.6"/><circle cx="1335.4" cy="870.4" r="1.6"/><circle cx="1342.9" cy="870.4" r="1.6"/><circle cx="1350.5" cy="870.4" r="1.6"/><circle cx="1358.1" cy="870.4" r="1.6"/><circle cx="1365.6" cy="870.4" r="1.6"/><circle cx="1373.2" cy="870.4" r="1.6"/><circle cx="1380.7" cy="870.4" r="1.6"/><circle cx="1388.3" cy="870.4" r="1.6"/><circle cx="1395.9" cy="870.4" r="1.6"/><circle cx="1403.4" cy="870.4" r="1.6"/><circle cx="1411.0" cy="870.4" r="1.6"/><circle cx="1418.5" cy="770.0" r="1.6"/><circle cx="1426.1" cy="771.1" r="1.6"/><circle cx="1433.7" cy="771.1" r="1.6"/><circle cx="1441.2" cy="870.4" r="1.6"/><circle cx="1448.8" cy="870.4" r="1.6"/><circle cx="1456.3" cy="870.4" r="1.6"/><circle cx="1463.9" cy="870.4" r="1.6"/><circle cx="1471.5" cy="870.4" r="1.6"/><circle cx="1479.0" cy="870.4" r="1.6"/><circle cx="1486.6" cy="868.3" r="1.6"/><circle cx="1494.1" cy="868.3" r="1.6"/><circle cx="1501.7" cy="868.3" r="1.6"/><circle cx="1509.3" cy="868.3" r="1.6"/><circle cx="1516.8" cy="868.3" r="1.6"/><circle cx="1524.4" cy="868.3" r="1.6"/><circle cx="1531.9" cy="868.3" r="1.6"/><circle cx="1539.5" cy="769.6" r="1.6"/><circle cx="1547.1" cy="770.7" r="1.6"/><circle cx="1554.6" cy="769.6" r="1.6"/><circle cx="1562.2" cy="817.4" r="1.6"/><circle cx="1569.7" cy="815.2" r="1.6"/><circle cx="1577.3" cy="814.2" r="1.6"/><circle cx="1584.9" cy="863.0" r="1.6"/><circle cx="1592.4" cy="861.9" r="1.6"/><circle cx="1600.0" cy="861.9" r="1.6"/><circle cx="1607.5" cy="861.9" r="1.6"/><circle cx="1615.1" cy="861.9" r="1.6"/><circle cx="1622.7" cy="863.0" r="1.6"/><circle cx="1630.2" cy="817.4" r="1.6"/><circle cx="1637.8" cy="861.9" r="1.6"/><circle cx="1645.3" cy="830.1" r="1.6"/><circle cx="1652.9" cy="830.1" r="1.6"/><circle cx="1660.5" cy="828.0" r="1.6"/><circle cx="1668.0" cy="828.0" r="1.6"/><circle cx="1675.6" cy="830.1" r="1.6"/><circle cx="1683.1" cy="863.0" r="1.6"/><circle cx="1690.7" cy="859.8" r="1.6"/><circle cx="1698.3" cy="861.9" r="1.6"/><circle cx="1705.8" cy="861.9" r="1.6"/><circle cx="1713.4" cy="859.8" r="1.6"/><circle cx="1720.9" cy="859.8" r="1.6"/><circle cx="1728.5" cy="862.0" r="1.6"/><circle cx="1736.1" cy="859.8" r="1.6"/><circle cx="1743.6" cy="859.8" r="1.6"/><circle cx="1751.2" cy="862.0" r="1.6"/><circle cx="1758.7" cy="859.8" r="1.6"/><circle cx="1766.3" cy="860.4" r="1.6"/><circle cx="1773.9" cy="829.3" r="1.6"/><circle cx="1781.4" cy="828.0" r="1.6"/><circle cx="1789.0" cy="784.7" r="1.6"/><circle cx="1796.5" cy="828.0" r="1.6"/><circle cx="1804.1" cy="827.0" r="1.6"/><circle cx="1811.7" cy="825.4" r="1.6"/><circle cx="1819.2" cy="828.0" r="1.6"/><circle cx="1826.8" cy="828.0" r="1.6"/></g><path d="M745.70 823.73C745.70 823.73 751.93 828.83 753.26 825.85C759.49 811.85 758.30 808.01 760.82 789.77C765.86 753.35 765.31 713.28 768.38 716.53C772.87 726.61 768.94 776.10 775.94 823.73C776.50 827.57 779.53 820.04 783.50 819.48C787.09 818.98 787.23 820.80 791.06 821.61C794.79 822.39 794.84 822.14 798.62 822.67C802.40 823.20 802.45 823.99 806.18 823.73C810.01 823.46 809.89 822.15 813.74 821.61C817.45 821.09 817.52 821.61 821.30 821.61C825.08 821.61 825.18 820.99 828.86 821.61C832.74 822.26 835.91 827.78 836.42 824.15C843.47 774.18 836.91 765.75 843.98 714.41C844.47 713.28 851.05 713.28 851.54 714.41C858.61 765.01 852.04 772.59 859.10 822.67C859.60 826.19 862.93 821.35 866.66 821.61C870.49 821.88 870.37 823.19 874.22 823.73C877.93 824.25 878.00 823.73 881.78 823.73C885.56 823.73 885.58 823.99 889.34 823.73C893.14 823.46 893.12 823.20 896.90 822.67C900.68 822.14 900.73 821.35 904.46 821.61C908.29 821.88 908.19 822.92 912.02 823.73C915.75 824.51 919.08 828.31 919.58 824.79C926.64 774.72 920.07 767.14 927.14 716.53C927.63 713.28 934.20 713.28 934.70 716.53C941.76 766.08 935.21 773.65 942.26 822.67C942.77 826.19 946.02 821.87 949.82 821.61C953.58 821.34 953.60 821.61 957.38 821.61C961.16 821.61 961.23 821.09 964.94 821.61C968.79 822.15 968.72 823.73 972.50 823.73C976.28 823.73 976.21 822.15 980.06 821.61C983.77 821.09 983.84 821.61 987.62 821.61C991.40 821.61 991.42 821.34 995.18 821.61C998.98 821.87 998.96 822.67 1002.74 822.67C1006.52 822.67 1009.80 825.20 1010.30 821.61C1017.36 771.07 1010.80 764.49 1017.86 714.41C1018.36 713.28 1024.93 713.28 1025.42 714.41C1032.49 765.01 1025.92 771.60 1032.98 822.67C1033.48 826.26 1036.74 823.46 1040.54 823.73C1044.30 823.99 1044.32 823.73 1048.10 823.73C1051.88 823.73 1051.95 824.25 1055.66 823.73C1059.51 823.19 1059.52 822.90 1063.22 821.61C1067.08 820.25 1067.22 817.92 1070.78 818.42C1074.78 818.98 1074.25 821.72 1078.34 823.73C1081.81 825.44 1082.07 825.05 1085.90 825.85C1089.63 826.64 1092.19 829.94 1093.46 826.91C1099.75 811.90 1098.47 808.53 1101.02 789.77C1106.03 752.81 1101.72 748.69 1108.58 715.47C1109.28 713.28 1115.64 713.28 1116.14 716.53C1123.20 767.60 1116.64 774.72 1123.70 824.79C1124.20 828.31 1127.46 824.00 1131.26 823.73C1135.02 823.47 1135.11 824.25 1138.82 823.73C1142.67 823.19 1142.55 821.88 1146.38 821.61C1150.11 821.35 1150.16 822.14 1153.94 822.67C1157.72 823.20 1157.70 823.46 1161.50 823.73C1165.26 823.99 1165.35 824.25 1169.06 823.73C1172.91 823.19 1172.77 822.15 1176.62 821.61C1180.33 821.09 1180.42 821.87 1184.18 821.61C1187.98 821.34 1191.24 824.14 1191.74 820.55C1198.80 769.97 1192.25 762.48 1199.30 713.28C1199.81 713.28 1203.07 714.23 1206.86 715.05C1210.63 715.86 1213.91 713.28 1214.42 716.53C1221.47 767.24 1214.93 774.77 1221.98 823.73C1222.49 827.31 1225.69 822.15 1229.54 821.61C1233.25 821.09 1233.34 821.34 1237.10 821.61C1240.90 821.87 1240.93 821.88 1244.66 822.67C1248.49 823.48 1248.44 823.73 1252.22 824.79C1256.00 825.85 1256.31 827.65 1259.78 826.91C1263.87 826.05 1263.25 822.47 1267.34 821.61C1270.81 820.88 1271.05 823.19 1274.90 823.73C1278.61 824.25 1278.68 823.73 1282.46 823.73C1286.24 823.73 1286.24 823.73 1290.02 823.73C1293.80 823.73 1293.82 823.47 1297.58 823.73C1301.38 824.00 1304.65 828.32 1305.14 824.79C1312.21 773.34 1305.65 764.25 1312.70 713.77C1313.21 713.28 1319.74 713.28 1320.26 716.53C1327.30 768.21 1320.76 774.72 1327.82 824.79C1328.32 828.31 1331.58 824.00 1335.38 823.73C1339.14 823.47 1339.23 824.25 1342.94 823.73C1346.79 823.19 1346.65 822.15 1350.50 821.61C1354.21 821.09 1354.28 821.61 1358.06 821.61C1361.84 821.61 1361.91 821.09 1365.62 821.61C1369.47 822.15 1369.33 823.19 1373.18 823.73C1376.89 824.25 1376.96 823.73 1380.74 823.73C1384.52 823.73 1384.59 824.25 1388.30 823.73C1392.15 823.19 1392.11 822.77 1395.86 821.61C1399.67 820.43 1399.73 818.80 1403.42 819.06C1407.29 819.33 1410.42 826.40 1410.98 822.67C1417.98 776.20 1411.56 764.71 1418.54 718.66C1419.12 714.83 1422.32 722.90 1426.10 722.90C1429.88 722.90 1433.09 714.82 1433.66 718.66C1440.65 765.76 1434.20 774.04 1441.22 824.79C1441.76 828.70 1444.85 827.15 1448.78 827.97C1452.41 828.74 1452.56 827.97 1456.34 827.97C1460.12 827.97 1460.24 827.30 1463.90 827.97C1467.80 828.69 1467.58 830.31 1471.46 830.74C1475.14 830.74 1475.27 830.36 1479.02 829.67C1482.83 828.98 1482.75 828.40 1486.58 827.97C1490.31 827.56 1490.36 827.97 1494.14 827.97C1497.92 827.97 1497.92 827.97 1501.70 827.97C1505.48 827.97 1505.58 828.59 1509.26 827.97C1513.14 827.32 1512.94 826.08 1516.82 825.43C1520.50 824.81 1520.79 824.57 1524.38 825.43C1528.35 826.38 1531.38 830.74 1531.94 829.04C1538.94 782.04 1532.46 773.84 1539.50 723.96C1540.02 720.25 1543.47 723.35 1547.06 721.84C1551.03 720.17 1553.97 713.83 1554.62 717.59C1561.53 757.35 1555.90 763.87 1562.18 808.87C1563.46 818.00 1564.38 820.21 1569.74 825.85C1571.94 828.17 1573.52 824.79 1577.30 824.79C1581.08 824.79 1582.74 828.24 1584.86 825.85C1590.30 819.74 1588.23 808.99 1592.42 807.81C1595.79 806.86 1594.87 816.95 1599.98 821.61C1602.43 823.85 1604.02 820.62 1607.54 821.61C1611.58 822.74 1611.06 824.72 1615.10 825.85C1618.62 826.84 1618.95 826.37 1622.66 825.85C1626.51 825.31 1626.39 824.54 1630.22 823.73C1633.95 822.94 1636.51 825.87 1637.78 822.67C1644.07 806.77 1639.04 801.01 1645.34 785.52C1646.60 782.43 1649.19 786.04 1652.90 785.52C1656.75 784.98 1656.76 784.70 1660.46 783.40C1664.32 782.04 1664.72 779.29 1668.02 780.21C1672.28 781.41 1673.85 782.80 1675.58 787.64C1681.41 804.02 1677.31 812.02 1683.14 822.67C1684.87 825.82 1687.10 819.13 1690.70 815.24C1694.66 810.95 1695.19 805.03 1698.26 806.32C1702.75 808.21 1700.58 816.31 1705.82 821.61C1708.14 823.95 1709.60 821.60 1713.38 821.61C1717.16 821.61 1717.16 821.62 1720.94 821.63C1724.72 821.63 1727.33 824.77 1728.50 821.63C1734.89 804.41 1732.38 780.36 1736.06 780.90C1739.94 781.47 1737.26 807.12 1743.62 823.85C1744.82 827.00 1747.25 821.50 1751.18 820.67C1754.81 819.91 1754.96 820.67 1758.74 820.67C1762.52 820.67 1764.93 823.69 1766.30 820.67C1772.49 806.99 1767.67 800.95 1773.86 787.26C1775.23 784.24 1777.64 787.26 1781.42 787.26C1785.20 787.26 1785.20 787.26 1788.98 787.26C1792.76 787.26 1792.76 787.26 1796.54 787.26C1800.32 787.26 1800.42 787.88 1804.10 787.26C1807.98 786.61 1807.78 785.37 1811.66 784.72C1815.34 784.10 1815.65 785.62 1819.22 784.72C1823.21 783.71 1826.78 780.90 1826.78 780.90" fill="none" stroke="#18b85a" stroke-width="2.4" stroke-linejoin="round"/><g fill="#fff" stroke="#18b85a" stroke-width="1"><circle cx="745.7" cy="823.7" r="1.6"/><circle cx="753.3" cy="825.9" r="1.6"/><circle cx="760.8" cy="789.8" r="1.6"/><circle cx="768.4" cy="716.5" r="1.6"/><circle cx="775.9" cy="823.7" r="1.6"/><circle cx="783.5" cy="819.5" r="1.6"/><circle cx="791.1" cy="821.6" r="1.6"/><circle cx="798.6" cy="822.7" r="1.6"/><circle cx="806.2" cy="823.7" r="1.6"/><circle cx="813.7" cy="821.6" r="1.6"/><circle cx="821.3" cy="821.6" r="1.6"/><circle cx="828.9" cy="821.6" r="1.6"/><circle cx="836.4" cy="824.2" r="1.6"/><circle cx="844.0" cy="714.4" r="1.6"/><circle cx="851.5" cy="714.4" r="1.6"/><circle cx="859.1" cy="822.7" r="1.6"/><circle cx="866.7" cy="821.6" r="1.6"/><circle cx="874.2" cy="823.7" r="1.6"/><circle cx="881.8" cy="823.7" r="1.6"/><circle cx="889.3" cy="823.7" r="1.6"/><circle cx="896.9" cy="822.7" r="1.6"/><circle cx="904.5" cy="821.6" r="1.6"/><circle cx="912.0" cy="823.7" r="1.6"/><circle cx="919.6" cy="824.8" r="1.6"/><circle cx="927.1" cy="716.5" r="1.6"/><circle cx="934.7" cy="716.5" r="1.6"/><circle cx="942.3" cy="822.7" r="1.6"/><circle cx="949.8" cy="821.6" r="1.6"/><circle cx="957.4" cy="821.6" r="1.6"/><circle cx="964.9" cy="821.6" r="1.6"/><circle cx="972.5" cy="823.7" r="1.6"/><circle cx="980.1" cy="821.6" r="1.6"/><circle cx="987.6" cy="821.6" r="1.6"/><circle cx="995.2" cy="821.6" r="1.6"/><circle cx="1002.7" cy="822.7" r="1.6"/><circle cx="1010.3" cy="821.6" r="1.6"/><circle cx="1017.9" cy="714.4" r="1.6"/><circle cx="1025.4" cy="714.4" r="1.6"/><circle cx="1033.0" cy="822.7" r="1.6"/><circle cx="1040.5" cy="823.7" r="1.6"/><circle cx="1048.1" cy="823.7" r="1.6"/><circle cx="1055.7" cy="823.7" r="1.6"/><circle cx="1063.2" cy="821.6" r="1.6"/><circle cx="1070.8" cy="818.4" r="1.6"/><circle cx="1078.3" cy="823.7" r="1.6"/><circle cx="1085.9" cy="825.9" r="1.6"/><circle cx="1093.5" cy="826.9" r="1.6"/><circle cx="1101.0" cy="789.8" r="1.6"/><circle cx="1108.6" cy="715.5" r="1.6"/><circle cx="1116.1" cy="716.5" r="1.6"/><circle cx="1123.7" cy="824.8" r="1.6"/><circle cx="1131.3" cy="823.7" r="1.6"/><circle cx="1138.8" cy="823.7" r="1.6"/><circle cx="1146.4" cy="821.6" r="1.6"/><circle cx="1153.9" cy="822.7" r="1.6"/><circle cx="1161.5" cy="823.7" r="1.6"/><circle cx="1169.1" cy="823.7" r="1.6"/><circle cx="1176.6" cy="821.6" r="1.6"/><circle cx="1184.2" cy="821.6" r="1.6"/><circle cx="1191.7" cy="820.5" r="1.6"/><circle cx="1199.3" cy="713.3" r="1.6"/><circle cx="1206.9" cy="715.0" r="1.6"/><circle cx="1214.4" cy="716.5" r="1.6"/><circle cx="1222.0" cy="823.7" r="1.6"/><circle cx="1229.5" cy="821.6" r="1.6"/><circle cx="1237.1" cy="821.6" r="1.6"/><circle cx="1244.7" cy="822.7" r="1.6"/><circle cx="1252.2" cy="824.8" r="1.6"/><circle cx="1259.8" cy="826.9" r="1.6"/><circle cx="1267.3" cy="821.6" r="1.6"/><circle cx="1274.9" cy="823.7" r="1.6"/><circle cx="1282.5" cy="823.7" r="1.6"/><circle cx="1290.0" cy="823.7" r="1.6"/><circle cx="1297.6" cy="823.7" r="1.6"/><circle cx="1305.1" cy="824.8" r="1.6"/><circle cx="1312.7" cy="713.8" r="1.6"/><circle cx="1320.3" cy="716.5" r="1.6"/><circle cx="1327.8" cy="824.8" r="1.6"/><circle cx="1335.4" cy="823.7" r="1.6"/><circle cx="1342.9" cy="823.7" r="1.6"/><circle cx="1350.5" cy="821.6" r="1.6"/><circle cx="1358.1" cy="821.6" r="1.6"/><circle cx="1365.6" cy="821.6" r="1.6"/><circle cx="1373.2" cy="823.7" r="1.6"/><circle cx="1380.7" cy="823.7" r="1.6"/><circle cx="1388.3" cy="823.7" r="1.6"/><circle cx="1395.9" cy="821.6" r="1.6"/><circle cx="1403.4" cy="819.1" r="1.6"/><circle cx="1411.0" cy="822.7" r="1.6"/><circle cx="1418.5" cy="718.7" r="1.6"/><circle cx="1426.1" cy="722.9" r="1.6"/><circle cx="1433.7" cy="718.7" r="1.6"/><circle cx="1441.2" cy="824.8" r="1.6"/><circle cx="1448.8" cy="828.0" r="1.6"/><circle cx="1456.3" cy="828.0" r="1.6"/><circle cx="1463.9" cy="828.0" r="1.6"/><circle cx="1471.5" cy="830.7" r="1.6"/><circle cx="1479.0" cy="829.7" r="1.6"/><circle cx="1486.6" cy="828.0" r="1.6"/><circle cx="1494.1" cy="828.0" r="1.6"/><circle cx="1501.7" cy="828.0" r="1.6"/><circle cx="1509.3" cy="828.0" r="1.6"/><circle cx="1516.8" cy="825.4" r="1.6"/><circle cx="1524.4" cy="825.4" r="1.6"/><circle cx="1531.9" cy="829.0" r="1.6"/><circle cx="1539.5" cy="724.0" r="1.6"/><circle cx="1547.1" cy="721.8" r="1.6"/><circle cx="1554.6" cy="717.6" r="1.6"/><circle cx="1562.2" cy="808.9" r="1.6"/><circle cx="1569.7" cy="825.9" r="1.6"/><circle cx="1577.3" cy="824.8" r="1.6"/><circle cx="1584.9" cy="825.9" r="1.6"/><circle cx="1592.4" cy="807.8" r="1.6"/><circle cx="1600.0" cy="821.6" r="1.6"/><circle cx="1607.5" cy="821.6" r="1.6"/><circle cx="1615.1" cy="825.9" r="1.6"/><circle cx="1622.7" cy="825.9" r="1.6"/><circle cx="1630.2" cy="823.7" r="1.6"/><circle cx="1637.8" cy="822.7" r="1.6"/><circle cx="1645.3" cy="785.5" r="1.6"/><circle cx="1652.9" cy="785.5" r="1.6"/><circle cx="1660.5" cy="783.4" r="1.6"/><circle cx="1668.0" cy="780.2" r="1.6"/><circle cx="1675.6" cy="787.6" r="1.6"/><circle cx="1683.1" cy="822.7" r="1.6"/><circle cx="1690.7" cy="815.2" r="1.6"/><circle cx="1698.3" cy="806.3" r="1.6"/><circle cx="1705.8" cy="821.6" r="1.6"/><circle cx="1713.4" cy="821.6" r="1.6"/><circle cx="1720.9" cy="821.6" r="1.6"/><circle cx="1728.5" cy="821.6" r="1.6"/><circle cx="1736.1" cy="780.9" r="1.6"/><circle cx="1743.6" cy="823.9" r="1.6"/><circle cx="1751.2" cy="820.7" r="1.6"/><circle cx="1758.7" cy="820.7" r="1.6"/><circle cx="1766.3" cy="820.7" r="1.6"/><circle cx="1773.9" cy="787.3" r="1.6"/><circle cx="1781.4" cy="787.3" r="1.6"/><circle cx="1789.0" cy="787.3" r="1.6"/><circle cx="1796.5" cy="787.3" r="1.6"/><circle cx="1804.1" cy="787.3" r="1.6"/><circle cx="1811.7" cy="784.7" r="1.6"/><circle cx="1819.2" cy="784.7" r="1.6"/><circle cx="1826.8" cy="780.9" r="1.6"/></g><path d="M745.70 873.46C745.70 873.46 751.67 873.46 753.26 870.43C759.23 857.53 758.53 855.87 760.82 840.78C766.09 806.02 765.29 764.24 768.38 770.73C772.85 780.13 768.90 825.15 775.94 872.55C776.46 873.46 779.72 872.55 783.50 872.55C787.28 872.55 787.28 872.55 791.06 872.55C794.84 872.55 794.84 872.55 798.62 872.55C802.40 872.55 802.40 872.55 806.18 872.55C809.96 872.55 809.96 872.55 813.74 872.55C817.52 872.55 817.52 872.55 821.30 872.55C825.08 872.55 825.08 872.55 828.86 872.55C832.64 872.55 835.90 873.46 836.42 872.55C843.46 825.12 836.96 818.96 843.98 770.66C844.52 766.95 851.01 764.97 851.54 768.54C858.57 815.92 852.05 824.06 859.10 872.55C859.61 873.46 862.88 872.55 866.66 872.55C870.44 872.55 870.44 872.55 874.22 872.55C878.00 872.55 878.00 872.55 881.78 872.55C885.56 872.55 885.56 872.55 889.34 872.55C893.12 872.55 893.12 872.55 896.90 872.55C900.68 872.55 900.68 872.55 904.46 872.55C908.24 872.55 908.24 872.55 912.02 872.55C915.80 872.55 919.06 873.46 919.58 872.55C926.62 824.59 920.10 817.56 927.14 769.60C927.66 766.09 934.18 766.09 934.70 769.60C941.74 817.56 935.22 824.59 942.26 872.55C942.78 873.46 946.04 872.55 949.82 872.55C953.60 872.55 953.60 872.55 957.38 872.55C961.16 872.55 961.16 872.55 964.94 872.55C968.72 872.55 968.72 872.55 972.50 872.55C976.28 872.55 976.28 872.55 980.06 872.55C983.84 872.55 983.84 872.55 987.62 872.55C991.40 872.55 991.40 872.55 995.18 872.55C998.96 872.55 998.96 872.55 1002.74 872.55C1006.52 872.55 1009.79 873.46 1010.30 872.55C1017.35 824.06 1010.82 817.49 1017.86 768.54C1018.38 764.96 1024.91 763.96 1025.42 767.48C1032.47 815.97 1025.93 823.53 1032.98 872.55C1033.49 873.46 1036.76 872.55 1040.54 872.55C1044.32 872.55 1044.32 872.55 1048.10 872.55C1051.88 872.55 1051.88 872.55 1055.66 872.55C1059.44 872.55 1059.44 872.55 1063.22 872.55C1067.00 872.55 1067.00 872.55 1070.78 872.55C1074.56 872.55 1074.56 872.55 1078.34 872.55C1082.12 872.55 1082.12 872.55 1085.90 872.55C1089.68 872.55 1092.04 873.46 1093.46 872.55C1099.60 859.65 1098.68 856.91 1101.02 840.78C1106.24 804.91 1101.74 800.74 1108.58 768.54C1109.30 765.15 1115.62 766.02 1116.14 769.60C1123.18 818.03 1116.66 824.59 1123.70 872.55C1124.22 873.46 1127.48 872.55 1131.26 872.55C1135.04 872.55 1135.04 872.55 1138.82 872.55C1142.60 872.55 1142.60 872.55 1146.38 872.55C1150.16 872.55 1150.16 872.55 1153.94 872.55C1157.72 872.55 1157.72 872.55 1161.50 872.55C1165.28 872.55 1165.28 872.55 1169.06 872.55C1172.84 872.55 1172.84 872.55 1176.62 872.55C1180.40 872.55 1180.40 872.55 1184.18 872.55C1187.96 872.55 1191.22 873.46 1191.74 872.55C1198.78 825.12 1192.26 818.10 1199.30 770.66C1199.82 767.15 1203.10 770.93 1206.86 770.66C1210.66 770.40 1213.90 766.09 1214.42 769.60C1221.46 817.04 1214.94 824.59 1221.98 872.55C1222.50 873.46 1225.76 872.55 1229.54 872.55C1233.32 872.55 1233.32 872.55 1237.10 872.55C1240.88 872.55 1240.88 872.55 1244.66 872.55C1248.44 872.55 1248.44 872.55 1252.22 872.55C1256.00 872.55 1256.00 872.55 1259.78 872.55C1263.56 872.55 1263.56 872.55 1267.34 872.55C1271.12 872.55 1271.12 872.55 1274.90 872.55C1278.68 872.55 1278.68 872.55 1282.46 872.55C1286.24 872.55 1286.24 872.55 1290.02 872.55C1293.80 872.55 1293.80 872.55 1297.58 872.55C1301.36 872.55 1304.62 873.46 1305.14 872.55C1312.18 824.59 1305.66 817.56 1312.70 769.60C1313.22 766.09 1319.74 766.09 1320.26 769.60C1327.30 817.56 1320.78 824.59 1327.82 872.55C1328.34 873.46 1331.60 872.55 1335.38 872.55C1339.16 872.55 1339.16 872.55 1342.94 872.55C1346.72 872.55 1346.72 872.55 1350.50 872.55C1354.28 872.55 1354.28 872.55 1358.06 872.55C1361.84 872.55 1361.84 872.55 1365.62 872.55C1369.40 872.55 1369.40 872.55 1373.18 872.55C1376.96 872.55 1376.96 872.55 1380.74 872.55C1384.52 872.55 1384.52 872.55 1388.30 872.55C1392.08 872.55 1392.08 872.55 1395.86 872.55C1399.64 872.55 1399.64 872.55 1403.42 872.55C1407.20 872.55 1410.46 873.46 1410.98 872.55C1418.02 824.59 1411.50 817.04 1418.54 769.60C1419.06 766.09 1422.30 770.40 1426.10 770.66C1429.86 770.93 1433.14 767.15 1433.66 770.66C1440.70 818.10 1434.18 825.12 1441.22 872.55C1441.74 873.46 1445.00 872.55 1448.78 872.55C1452.56 872.55 1452.56 872.55 1456.34 872.55C1460.12 872.55 1460.12 872.55 1463.90 872.55C1467.68 872.55 1467.68 872.55 1471.46 872.55C1475.24 872.55 1475.24 872.55 1479.02 872.55C1482.80 872.55 1482.80 872.55 1486.58 872.55C1490.36 872.55 1490.36 872.55 1494.14 872.55C1497.92 872.55 1497.92 872.55 1501.70 872.55C1505.48 872.55 1505.48 872.55 1509.26 872.55C1513.04 872.55 1513.04 872.55 1516.82 872.55C1520.60 872.55 1520.60 872.55 1524.38 872.55C1528.16 872.55 1531.57 873.46 1531.94 872.55C1539.13 802.91 1532.32 794.59 1539.50 726.09C1539.88 726.09 1545.98 726.09 1547.06 728.23C1553.54 749.16 1552.16 751.41 1554.62 774.91C1559.72 823.57 1555.16 827.23 1562.18 872.55C1562.72 873.46 1566.22 873.46 1569.74 872.55C1573.78 871.42 1573.33 868.86 1577.30 868.31C1580.89 867.80 1581.01 869.89 1584.86 870.43C1588.57 870.95 1588.64 870.43 1592.42 870.43C1596.20 870.43 1596.20 870.43 1599.98 870.43C1603.76 870.43 1603.76 870.43 1607.54 870.43C1611.32 870.43 1611.32 870.43 1615.10 870.43C1618.88 870.43 1618.88 870.43 1622.66 870.43C1626.44 870.43 1626.44 870.43 1630.22 870.43C1634.00 870.43 1636.36 873.42 1637.78 870.43C1643.92 857.50 1639.20 851.52 1645.34 838.59C1646.76 835.60 1649.12 838.59 1652.90 838.59C1656.68 838.59 1656.68 838.59 1660.46 838.59C1664.24 838.59 1664.39 839.35 1668.02 838.59C1671.95 837.76 1674.20 832.41 1675.58 835.40C1681.76 848.86 1676.88 856.98 1683.14 871.49C1684.44 873.46 1686.90 870.70 1690.70 870.43C1694.46 870.16 1694.48 870.43 1698.26 870.43C1702.04 870.43 1702.04 870.43 1705.82 870.43C1709.60 870.43 1709.60 870.54 1713.38 870.43C1717.16 870.32 1717.16 870.10 1720.94 869.99C1724.72 869.88 1724.72 869.99 1728.50 869.99C1732.28 869.99 1732.28 869.99 1736.06 869.99C1739.84 869.99 1742.89 873.38 1743.62 869.99C1750.45 838.38 1746.60 834.88 1751.18 799.99C1754.16 777.29 1754.96 754.81 1758.74 754.81C1762.52 754.81 1761.89 796.09 1766.30 799.99C1769.45 802.77 1771.42 762.28 1773.86 768.17C1778.98 780.58 1774.61 805.76 1781.42 836.58C1782.17 839.96 1785.21 836.82 1788.98 836.58C1792.77 836.34 1792.75 835.86 1796.54 835.63C1800.31 835.39 1800.40 836.17 1804.10 835.63C1807.96 835.06 1807.88 833.40 1811.66 833.40C1815.44 833.40 1815.44 835.63 1819.22 835.63C1823.00 835.63 1826.78 833.40 1826.78 833.40" fill="none" stroke="#ff4a4a" stroke-width="2.4" stroke-linejoin="round"/><g fill="#fff" stroke="#ff4a4a" stroke-width="1"><circle cx="745.7" cy="873.5" r="1.6"/><circle cx="753.3" cy="870.4" r="1.6"/><circle cx="760.8" cy="840.8" r="1.6"/><circle cx="768.4" cy="770.7" r="1.6"/><circle cx="775.9" cy="872.6" r="1.6"/><circle cx="783.5" cy="872.6" r="1.6"/><circle cx="791.1" cy="872.6" r="1.6"/><circle cx="798.6" cy="872.6" r="1.6"/><circle cx="806.2" cy="872.6" r="1.6"/><circle cx="813.7" cy="872.6" r="1.6"/><circle cx="821.3" cy="872.6" r="1.6"/><circle cx="828.9" cy="872.6" r="1.6"/><circle cx="836.4" cy="872.6" r="1.6"/><circle cx="844.0" cy="770.7" r="1.6"/><circle cx="851.5" cy="768.5" r="1.6"/><circle cx="859.1" cy="872.6" r="1.6"/><circle cx="866.7" cy="872.6" r="1.6"/><circle cx="874.2" cy="872.6" r="1.6"/><circle cx="881.8" cy="872.6" r="1.6"/><circle cx="889.3" cy="872.6" r="1.6"/><circle cx="896.9" cy="872.6" r="1.6"/><circle cx="904.5" cy="872.6" r="1.6"/><circle cx="912.0" cy="872.6" r="1.6"/><circle cx="919.6" cy="872.6" r="1.6"/><circle cx="927.1" cy="769.6" r="1.6"/><circle cx="934.7" cy="769.6" r="1.6"/><circle cx="942.3" cy="872.6" r="1.6"/><circle cx="949.8" cy="872.6" r="1.6"/><circle cx="957.4" cy="872.6" r="1.6"/><circle cx="964.9" cy="872.6" r="1.6"/><circle cx="972.5" cy="872.6" r="1.6"/><circle cx="980.1" cy="872.6" r="1.6"/><circle cx="987.6" cy="872.6" r="1.6"/><circle cx="995.2" cy="872.6" r="1.6"/><circle cx="1002.7" cy="872.6" r="1.6"/><circle cx="1010.3" cy="872.6" r="1.6"/><circle cx="1017.9" cy="768.5" r="1.6"/><circle cx="1025.4" cy="767.5" r="1.6"/><circle cx="1033.0" cy="872.6" r="1.6"/><circle cx="1040.5" cy="872.6" r="1.6"/><circle cx="1048.1" cy="872.6" r="1.6"/><circle cx="1055.7" cy="872.6" r="1.6"/><circle cx="1063.2" cy="872.6" r="1.6"/><circle cx="1070.8" cy="872.6" r="1.6"/><circle cx="1078.3" cy="872.6" r="1.6"/><circle cx="1085.9" cy="872.6" r="1.6"/><circle cx="1093.5" cy="872.6" r="1.6"/><circle cx="1101.0" cy="840.8" r="1.6"/><circle cx="1108.6" cy="768.5" r="1.6"/><circle cx="1116.1" cy="769.6" r="1.6"/><circle cx="1123.7" cy="872.6" r="1.6"/><circle cx="1131.3" cy="872.6" r="1.6"/><circle cx="1138.8" cy="872.6" r="1.6"/><circle cx="1146.4" cy="872.6" r="1.6"/><circle cx="1153.9" cy="872.6" r="1.6"/><circle cx="1161.5" cy="872.6" r="1.6"/><circle cx="1169.1" cy="872.6" r="1.6"/><circle cx="1176.6" cy="872.6" r="1.6"/><circle cx="1184.2" cy="872.6" r="1.6"/><circle cx="1191.7" cy="872.6" r="1.6"/><circle cx="1199.3" cy="770.7" r="1.6"/><circle cx="1206.9" cy="770.7" r="1.6"/><circle cx="1214.4" cy="769.6" r="1.6"/><circle cx="1222.0" cy="872.6" r="1.6"/><circle cx="1229.5" cy="872.6" r="1.6"/><circle cx="1237.1" cy="872.6" r="1.6"/><circle cx="1244.7" cy="872.6" r="1.6"/><circle cx="1252.2" cy="872.6" r="1.6"/><circle cx="1259.8" cy="872.6" r="1.6"/><circle cx="1267.3" cy="872.6" r="1.6"/><circle cx="1274.9" cy="872.6" r="1.6"/><circle cx="1282.5" cy="872.6" r="1.6"/><circle cx="1290.0" cy="872.6" r="1.6"/><circle cx="1297.6" cy="872.6" r="1.6"/><circle cx="1305.1" cy="872.6" r="1.6"/><circle cx="1312.7" cy="769.6" r="1.6"/><circle cx="1320.3" cy="769.6" r="1.6"/><circle cx="1327.8" cy="872.6" r="1.6"/><circle cx="1335.4" cy="872.6" r="1.6"/><circle cx="1342.9" cy="872.6" r="1.6"/><circle cx="1350.5" cy="872.6" r="1.6"/><circle cx="1358.1" cy="872.6" r="1.6"/><circle cx="1365.6" cy="872.6" r="1.6"/><circle cx="1373.2" cy="872.6" r="1.6"/><circle cx="1380.7" cy="872.6" r="1.6"/><circle cx="1388.3" cy="872.6" r="1.6"/><circle cx="1395.9" cy="872.6" r="1.6"/><circle cx="1403.4" cy="872.6" r="1.6"/><circle cx="1411.0" cy="872.6" r="1.6"/><circle cx="1418.5" cy="769.6" r="1.6"/><circle cx="1426.1" cy="770.7" r="1.6"/><circle cx="1433.7" cy="770.7" r="1.6"/><circle cx="1441.2" cy="872.6" r="1.6"/><circle cx="1448.8" cy="872.6" r="1.6"/><circle cx="1456.3" cy="872.6" r="1.6"/><circle cx="1463.9" cy="872.6" r="1.6"/><circle cx="1471.5" cy="872.6" r="1.6"/><circle cx="1479.0" cy="872.6" r="1.6"/><circle cx="1486.6" cy="872.6" r="1.6"/><circle cx="1494.1" cy="872.6" r="1.6"/><circle cx="1501.7" cy="872.6" r="1.6"/><circle cx="1509.3" cy="872.6" r="1.6"/><circle cx="1516.8" cy="872.6" r="1.6"/><circle cx="1524.4" cy="872.6" r="1.6"/><circle cx="1531.9" cy="872.6" r="1.6"/><circle cx="1539.5" cy="726.1" r="1.6"/><circle cx="1547.1" cy="728.2" r="1.6"/><circle cx="1554.6" cy="774.9" r="1.6"/><circle cx="1562.2" cy="872.6" r="1.6"/><circle cx="1569.7" cy="872.6" r="1.6"/><circle cx="1577.3" cy="868.3" r="1.6"/><circle cx="1584.9" cy="870.4" r="1.6"/><circle cx="1592.4" cy="870.4" r="1.6"/><circle cx="1600.0" cy="870.4" r="1.6"/><circle cx="1607.5" cy="870.4" r="1.6"/><circle cx="1615.1" cy="870.4" r="1.6"/><circle cx="1622.7" cy="870.4" r="1.6"/><circle cx="1630.2" cy="870.4" r="1.6"/><circle cx="1637.8" cy="870.4" r="1.6"/><circle cx="1645.3" cy="838.6" r="1.6"/><circle cx="1652.9" cy="838.6" r="1.6"/><circle cx="1660.5" cy="838.6" r="1.6"/><circle cx="1668.0" cy="838.6" r="1.6"/><circle cx="1675.6" cy="835.4" r="1.6"/><circle cx="1683.1" cy="871.5" r="1.6"/><circle cx="1690.7" cy="870.4" r="1.6"/><circle cx="1698.3" cy="870.4" r="1.6"/><circle cx="1705.8" cy="870.4" r="1.6"/><circle cx="1713.4" cy="870.4" r="1.6"/><circle cx="1720.9" cy="870.0" r="1.6"/><circle cx="1728.5" cy="870.0" r="1.6"/><circle cx="1736.1" cy="870.0" r="1.6"/><circle cx="1743.6" cy="870.0" r="1.6"/><circle cx="1751.2" cy="800.0" r="1.6"/><circle cx="1758.7" cy="754.8" r="1.6"/><circle cx="1766.3" cy="800.0" r="1.6"/><circle cx="1773.9" cy="768.2" r="1.6"/><circle cx="1781.4" cy="836.6" r="1.6"/><circle cx="1789.0" cy="836.6" r="1.6"/><circle cx="1796.5" cy="835.6" r="1.6"/><circle cx="1804.1" cy="835.6" r="1.6"/><circle cx="1811.7" cy="833.4" r="1.6"/><circle cx="1819.2" cy="835.6" r="1.6"/><circle cx="1826.8" cy="833.4" r="1.6"/></g><path d="M745.70 802.50C745.70 802.50 752.72 807.06 753.26 803.56C760.28 758.18 758.42 754.23 760.82 704.74C765.98 598.03 765.29 471.63 768.38 491.17C772.85 519.45 768.57 650.64 775.94 800.38C776.13 804.18 779.72 798.26 783.50 798.26C787.28 798.26 787.21 799.84 791.06 800.38C794.77 800.90 794.84 800.38 798.62 800.38C802.40 800.38 802.47 800.90 806.18 800.38C810.03 799.84 809.89 798.91 813.74 798.26C817.45 797.63 817.55 797.57 821.30 797.83C825.11 798.10 825.15 798.33 828.86 799.32C832.71 800.34 836.23 805.72 836.42 801.87C843.79 651.01 836.60 642.19 843.98 489.89C844.16 486.20 851.36 486.20 851.54 489.89C858.92 640.91 851.72 648.84 859.10 799.32C859.28 803.03 862.93 798.00 866.66 798.26C870.49 798.53 870.37 799.84 874.22 800.38C877.93 800.90 878.00 800.38 881.78 800.38C885.56 800.38 885.56 800.38 889.34 800.38C893.12 800.38 893.12 800.38 896.90 800.38C900.68 800.38 900.75 799.86 904.46 800.38C908.31 800.92 908.20 801.59 912.02 802.50C915.76 803.40 919.40 807.73 919.58 803.99C926.96 651.74 919.76 643.57 927.14 490.53C927.32 486.84 934.52 486.84 934.70 490.53C942.08 642.29 934.88 650.47 942.26 801.44C942.44 805.18 946.05 800.75 949.82 799.96C953.61 799.16 953.63 798.15 957.38 798.26C961.19 798.36 961.09 799.84 964.94 800.38C968.65 800.90 968.82 801.00 972.50 800.38C976.38 799.73 976.18 798.38 980.06 797.83C983.74 797.32 983.88 797.73 987.62 798.26C991.44 798.79 991.36 799.42 995.18 799.96C998.92 800.48 998.96 800.27 1002.74 800.38C1006.52 800.49 1010.12 804.07 1010.30 800.38C1017.68 648.93 1010.52 643.34 1017.86 490.10C1018.08 485.53 1025.20 480.34 1025.42 484.76C1032.76 634.95 1025.60 645.43 1032.98 799.32C1033.16 803.03 1036.75 799.80 1040.54 799.96C1044.31 800.11 1044.32 799.96 1048.10 799.96C1051.88 799.96 1051.93 800.37 1055.66 799.96C1059.49 799.53 1059.40 798.79 1063.22 798.26C1066.96 797.73 1067.30 796.86 1070.78 797.83C1074.86 798.98 1074.26 801.36 1078.34 802.50C1081.82 803.48 1082.15 801.82 1085.90 802.08C1089.71 802.35 1092.91 807.07 1093.46 803.56C1100.47 758.40 1098.63 754.23 1101.02 704.74C1106.19 597.50 1101.28 593.77 1108.58 490.10C1108.84 486.45 1115.96 486.41 1116.14 490.10C1123.52 643.14 1116.32 651.70 1123.70 803.56C1123.88 807.37 1127.48 802.50 1131.26 801.44C1135.04 800.38 1135.00 800.23 1138.82 799.32C1142.56 798.43 1142.57 798.10 1146.38 797.83C1150.13 797.57 1150.20 797.73 1153.94 798.26C1157.76 798.79 1157.67 799.53 1161.50 799.96C1165.23 800.37 1165.28 799.96 1169.06 799.96C1172.84 799.96 1172.84 799.96 1176.62 799.96C1180.40 799.96 1180.40 799.96 1184.18 799.96C1187.96 799.96 1191.56 803.64 1191.74 799.96C1199.12 648.72 1191.92 640.54 1199.30 490.10C1199.48 486.36 1203.08 491.59 1206.86 491.59C1210.64 491.59 1214.24 486.36 1214.42 490.10C1221.80 640.75 1214.61 650.10 1221.98 800.38C1222.17 804.18 1225.69 798.80 1229.54 798.26C1233.25 797.74 1233.39 797.74 1237.10 798.26C1240.95 798.80 1240.88 799.32 1244.66 800.38C1248.44 801.44 1248.37 801.96 1252.22 802.50C1255.93 803.02 1256.10 803.12 1259.78 802.50C1263.66 801.85 1263.46 800.61 1267.34 799.96C1271.02 799.34 1271.22 799.34 1274.90 799.96C1278.78 800.61 1278.58 801.85 1282.46 802.50C1286.14 803.12 1286.24 802.50 1290.02 802.50C1293.80 802.50 1293.82 802.24 1297.58 802.50C1301.38 802.77 1304.96 807.28 1305.14 803.56C1312.52 650.54 1305.32 642.61 1312.70 489.03C1312.88 485.34 1320.08 485.34 1320.26 489.03C1327.64 641.55 1320.44 649.72 1327.82 801.44C1328.00 805.18 1331.56 800.33 1335.38 799.96C1339.12 799.59 1339.23 800.48 1342.94 799.96C1346.79 799.41 1346.65 798.37 1350.50 797.83C1354.21 797.31 1354.35 797.31 1358.06 797.83C1361.91 798.37 1361.77 799.41 1365.62 799.96C1369.33 800.48 1369.40 799.96 1373.18 799.96C1376.96 799.96 1376.96 799.96 1380.74 799.96C1384.52 799.96 1384.57 800.37 1388.30 799.96C1392.13 799.53 1392.04 798.79 1395.86 798.26C1399.60 797.73 1399.83 797.08 1403.42 797.83C1407.39 798.67 1410.78 805.47 1410.98 801.44C1418.34 653.74 1411.18 642.06 1418.54 494.37C1418.74 490.34 1422.16 497.44 1426.10 498.00C1429.72 498.51 1433.47 492.77 1433.66 496.51C1441.03 645.55 1433.84 653.24 1441.22 803.56C1441.40 807.30 1444.98 804.36 1448.78 804.63C1452.54 804.89 1452.56 804.63 1456.34 804.63C1460.12 804.63 1460.43 803.53 1463.90 804.63C1467.99 805.91 1467.68 809.39 1471.46 809.39C1475.24 809.39 1474.93 805.91 1479.02 804.63C1482.49 803.53 1482.80 804.63 1486.58 804.63C1490.36 804.63 1490.43 804.10 1494.14 804.63C1497.99 805.17 1498.00 807.01 1501.70 806.75C1505.56 806.48 1505.40 804.92 1509.26 803.56C1512.96 802.27 1512.97 801.82 1516.82 801.44C1520.53 801.08 1520.79 801.07 1524.38 802.08C1528.35 803.19 1531.76 809.39 1531.94 805.69C1539.32 637.19 1532.10 627.08 1539.50 457.00C1539.66 457.00 1545.86 457.00 1547.06 458.06C1553.42 475.32 1553.51 477.74 1554.62 498.00C1561.07 615.46 1555.20 616.46 1562.18 733.52C1562.76 743.23 1564.84 748.12 1569.74 751.56C1572.40 753.42 1575.99 740.44 1577.30 744.13C1583.55 761.67 1579.26 781.43 1584.86 794.01C1586.82 798.41 1588.43 778.65 1592.42 778.09C1595.99 777.59 1594.88 787.38 1599.98 791.89C1602.44 794.06 1603.83 791.05 1607.54 791.46C1611.39 791.90 1611.27 792.78 1615.10 793.59C1618.83 794.37 1621.64 797.84 1622.66 794.65C1629.20 774.17 1626.24 747.53 1630.22 746.25C1633.80 745.09 1635.49 798.52 1637.78 789.77C1643.05 769.65 1638.31 735.32 1645.34 688.51C1645.87 685.01 1649.27 689.76 1652.90 689.15C1656.83 688.48 1656.68 687.54 1660.46 685.94C1664.24 684.34 1664.52 682.15 1668.02 682.74C1672.08 683.43 1674.93 683.92 1675.58 688.51C1682.49 737.44 1676.25 746.53 1683.14 789.77C1683.81 793.98 1686.57 786.01 1690.70 783.40C1694.13 781.23 1695.22 778.93 1698.26 780.21C1702.78 782.12 1701.16 786.82 1705.82 789.77C1708.72 791.60 1709.70 790.38 1713.38 789.77C1717.26 789.12 1717.16 787.25 1720.94 787.26C1724.72 787.27 1727.32 792.92 1728.50 789.81C1734.88 773.04 1732.02 749.02 1736.06 747.49C1739.58 746.16 1740.88 789.27 1743.62 784.08C1748.44 774.96 1746.71 751.37 1751.18 718.86C1754.27 696.43 1754.96 674.20 1758.74 674.20C1762.52 674.20 1763.92 727.32 1766.30 718.86C1771.48 700.41 1769.40 629.34 1773.86 620.38C1776.96 614.16 1776.87 681.43 1781.42 688.51C1784.43 693.18 1785.18 644.00 1788.98 643.87C1792.74 643.74 1790.12 670.35 1796.54 688.00C1797.68 691.14 1800.37 686.86 1804.10 685.45C1807.93 684.00 1807.73 683.10 1811.66 682.27C1815.29 681.51 1815.65 683.17 1819.22 682.27C1823.21 681.26 1826.78 678.45 1826.78 678.45" fill="none" stroke="#b4a3de" stroke-width="2.4" stroke-linejoin="round"/><g fill="#fff" stroke="#b4a3de" stroke-width="1"><circle cx="745.7" cy="802.5" r="1.6"/><circle cx="753.3" cy="803.6" r="1.6"/><circle cx="760.8" cy="704.7" r="1.6"/><circle cx="768.4" cy="491.2" r="1.6"/><circle cx="775.9" cy="800.4" r="1.6"/><circle cx="783.5" cy="798.3" r="1.6"/><circle cx="791.1" cy="800.4" r="1.6"/><circle cx="798.6" cy="800.4" r="1.6"/><circle cx="806.2" cy="800.4" r="1.6"/><circle cx="813.7" cy="798.3" r="1.6"/><circle cx="821.3" cy="797.8" r="1.6"/><circle cx="828.9" cy="799.3" r="1.6"/><circle cx="836.4" cy="801.9" r="1.6"/><circle cx="844.0" cy="489.9" r="1.6"/><circle cx="851.5" cy="489.9" r="1.6"/><circle cx="859.1" cy="799.3" r="1.6"/><circle cx="866.7" cy="798.3" r="1.6"/><circle cx="874.2" cy="800.4" r="1.6"/><circle cx="881.8" cy="800.4" r="1.6"/><circle cx="889.3" cy="800.4" r="1.6"/><circle cx="896.9" cy="800.4" r="1.6"/><circle cx="904.5" cy="800.4" r="1.6"/><circle cx="912.0" cy="802.5" r="1.6"/><circle cx="919.6" cy="804.0" r="1.6"/><circle cx="927.1" cy="490.5" r="1.6"/><circle cx="934.7" cy="490.5" r="1.6"/><circle cx="942.3" cy="801.4" r="1.6"/><circle cx="949.8" cy="800.0" r="1.6"/><circle cx="957.4" cy="798.3" r="1.6"/><circle cx="964.9" cy="800.4" r="1.6"/><circle cx="972.5" cy="800.4" r="1.6"/><circle cx="980.1" cy="797.8" r="1.6"/><circle cx="987.6" cy="798.3" r="1.6"/><circle cx="995.2" cy="800.0" r="1.6"/><circle cx="1002.7" cy="800.4" r="1.6"/><circle cx="1010.3" cy="800.4" r="1.6"/><circle cx="1017.9" cy="490.1" r="1.6"/><circle cx="1025.4" cy="484.8" r="1.6"/><circle cx="1033.0" cy="799.3" r="1.6"/><circle cx="1040.5" cy="800.0" r="1.6"/><circle cx="1048.1" cy="800.0" r="1.6"/><circle cx="1055.7" cy="800.0" r="1.6"/><circle cx="1063.2" cy="798.3" r="1.6"/><circle cx="1070.8" cy="797.8" r="1.6"/><circle cx="1078.3" cy="802.5" r="1.6"/><circle cx="1085.9" cy="802.1" r="1.6"/><circle cx="1093.5" cy="803.6" r="1.6"/><circle cx="1101.0" cy="704.7" r="1.6"/><circle cx="1108.6" cy="490.1" r="1.6"/><circle cx="1116.1" cy="490.1" r="1.6"/><circle cx="1123.7" cy="803.6" r="1.6"/><circle cx="1131.3" cy="801.4" r="1.6"/><circle cx="1138.8" cy="799.3" r="1.6"/><circle cx="1146.4" cy="797.8" r="1.6"/><circle cx="1153.9" cy="798.3" r="1.6"/><circle cx="1161.5" cy="800.0" r="1.6"/><circle cx="1169.1" cy="800.0" r="1.6"/><circle cx="1176.6" cy="800.0" r="1.6"/><circle cx="1184.2" cy="800.0" r="1.6"/><circle cx="1191.7" cy="800.0" r="1.6"/><circle cx="1199.3" cy="490.1" r="1.6"/><circle cx="1206.9" cy="491.6" r="1.6"/><circle cx="1214.4" cy="490.1" r="1.6"/><circle cx="1222.0" cy="800.4" r="1.6"/><circle cx="1229.5" cy="798.3" r="1.6"/><circle cx="1237.1" cy="798.3" r="1.6"/><circle cx="1244.7" cy="800.4" r="1.6"/><circle cx="1252.2" cy="802.5" r="1.6"/><circle cx="1259.8" cy="802.5" r="1.6"/><circle cx="1267.3" cy="800.0" r="1.6"/><circle cx="1274.9" cy="800.0" r="1.6"/><circle cx="1282.5" cy="802.5" r="1.6"/><circle cx="1290.0" cy="802.5" r="1.6"/><circle cx="1297.6" cy="802.5" r="1.6"/><circle cx="1305.1" cy="803.6" r="1.6"/><circle cx="1312.7" cy="489.0" r="1.6"/><circle cx="1320.3" cy="489.0" r="1.6"/><circle cx="1327.8" cy="801.4" r="1.6"/><circle cx="1335.4" cy="800.0" r="1.6"/><circle cx="1342.9" cy="800.0" r="1.6"/><circle cx="1350.5" cy="797.8" r="1.6"/><circle cx="1358.1" cy="797.8" r="1.6"/><circle cx="1365.6" cy="800.0" r="1.6"/><circle cx="1373.2" cy="800.0" r="1.6"/><circle cx="1380.7" cy="800.0" r="1.6"/><circle cx="1388.3" cy="800.0" r="1.6"/><circle cx="1395.9" cy="798.3" r="1.6"/><circle cx="1403.4" cy="797.8" r="1.6"/><circle cx="1411.0" cy="801.4" r="1.6"/><circle cx="1418.5" cy="494.4" r="1.6"/><circle cx="1426.1" cy="498.0" r="1.6"/><circle cx="1433.7" cy="496.5" r="1.6"/><circle cx="1441.2" cy="803.6" r="1.6"/><circle cx="1448.8" cy="804.6" r="1.6"/><circle cx="1456.3" cy="804.6" r="1.6"/><circle cx="1463.9" cy="804.6" r="1.6"/><circle cx="1471.5" cy="809.4" r="1.6"/><circle cx="1479.0" cy="804.6" r="1.6"/><circle cx="1486.6" cy="804.6" r="1.6"/><circle cx="1494.1" cy="804.6" r="1.6"/><circle cx="1501.7" cy="806.7" r="1.6"/><circle cx="1509.3" cy="803.6" r="1.6"/><circle cx="1516.8" cy="801.4" r="1.6"/><circle cx="1524.4" cy="802.1" r="1.6"/><circle cx="1531.9" cy="805.7" r="1.6"/><circle cx="1539.5" cy="457.0" r="1.6"/><circle cx="1547.1" cy="458.1" r="1.6"/><circle cx="1554.6" cy="498.0" r="1.6"/><circle cx="1562.2" cy="733.5" r="1.6"/><circle cx="1569.7" cy="751.6" r="1.6"/><circle cx="1577.3" cy="744.1" r="1.6"/><circle cx="1584.9" cy="794.0" r="1.6"/><circle cx="1592.4" cy="778.1" r="1.6"/><circle cx="1600.0" cy="791.9" r="1.6"/><circle cx="1607.5" cy="791.5" r="1.6"/><circle cx="1615.1" cy="793.6" r="1.6"/><circle cx="1622.7" cy="794.6" r="1.6"/><circle cx="1630.2" cy="746.3" r="1.6"/><circle cx="1637.8" cy="789.8" r="1.6"/><circle cx="1645.3" cy="688.5" r="1.6"/><circle cx="1652.9" cy="689.1" r="1.6"/><circle cx="1660.5" cy="685.9" r="1.6"/><circle cx="1668.0" cy="682.7" r="1.6"/><circle cx="1675.6" cy="688.5" r="1.6"/><circle cx="1683.1" cy="789.8" r="1.6"/><circle cx="1690.7" cy="783.4" r="1.6"/><circle cx="1698.3" cy="780.2" r="1.6"/><circle cx="1705.8" cy="789.8" r="1.6"/><circle cx="1713.4" cy="789.8" r="1.6"/><circle cx="1720.9" cy="787.3" r="1.6"/><circle cx="1728.5" cy="789.8" r="1.6"/><circle cx="1736.1" cy="747.5" r="1.6"/><circle cx="1743.6" cy="784.1" r="1.6"/><circle cx="1751.2" cy="718.9" r="1.6"/><circle cx="1758.7" cy="674.2" r="1.6"/><circle cx="1766.3" cy="718.9" r="1.6"/><circle cx="1773.9" cy="620.4" r="1.6"/><circle cx="1781.4" cy="688.5" r="1.6"/><circle cx="1789.0" cy="643.9" r="1.6"/><circle cx="1796.5" cy="688.0" r="1.6"/><circle cx="1804.1" cy="685.5" r="1.6"/><circle cx="1811.7" cy="682.3" r="1.6"/><circle cx="1819.2" cy="682.3" r="1.6"/><circle cx="1826.8" cy="678.5" r="1.6"/></g><circle cx="851.5" cy="768.8" r="6.3" fill="#e6a600"/><text x="851.5" y="751.8" text-anchor="middle" font-size="15.5" fill="#e6a600" font-family="Liberation Sans">Max:5.3</text><circle cx="745.7" cy="871.3" r="6.3" fill="#e6a600"/><text x="745.7" y="854.3" text-anchor="middle" font-size="15.5" fill="#e6a600" font-family="Liberation Sans">Min:0.5</text><circle cx="1199.3" cy="713.3" r="6.3" fill="#18b85a"/><text x="1199.3" y="696.3" text-anchor="middle" font-size="15.5" fill="#18b85a" font-family="Liberation Sans">Max:7.9</text><circle cx="1471.5" cy="830.7" r="6.3" fill="#18b85a"/><text x="1471.5" y="813.7" text-anchor="middle" font-size="15.5" fill="#18b85a" font-family="Liberation Sans">Min:2.4</text><circle cx="1539.5" cy="726.1" r="6.3" fill="#ff4a4a"/><text x="1539.5" y="709.1" text-anchor="middle" font-size="15.5" fill="#ff4a4a" font-family="Liberation Sans">Max:7.3</text><circle cx="745.7" cy="873.5" r="6.3" fill="#ff4a4a"/><text x="745.7" y="856.5" text-anchor="middle" font-size="15.5" fill="#ff4a4a" font-family="Liberation Sans">Min:0.4</text><circle cx="1539.5" cy="457.0" r="6.3" fill="#b4a3de"/><text x="1539.5" y="440.0" text-anchor="middle" font-size="15.5" fill="#b4a3de" font-family="Liberation Sans">Max:19.9</text><circle cx="1471.5" cy="809.4" r="6.3" fill="#b4a3de"/><text x="1471.5" y="792.4" text-anchor="middle" font-size="15.5" fill="#b4a3de" font-family="Liberation Sans">Min:3.4</text><rect x="746" y="905.5" width="1083" height="30.5" fill="#dae0ea"/><path d="M746 935.5 L745.7 935.5 L753.3 935.0 L760.8 928.3 L768.4 912.5 L775.9 935.3 L783.5 935.3 L791.1 935.3 L798.6 935.3 L806.2 935.3 L813.7 935.3 L821.3 935.3 L828.9 935.3 L836.4 935.3 L844.0 912.2 L851.5 911.7 L859.1 935.3 L866.7 935.3 L874.2 935.3 L881.8 935.3 L889.3 935.3 L896.9 935.3 L904.5 935.3 L912.0 935.3 L919.6 935.3 L927.1 912.0 L934.7 912.0 L942.3 935.3 L949.8 935.3 L957.4 935.3 L964.9 935.3 L972.5 935.3 L980.1 935.3 L987.6 935.3 L995.2 935.3 L1002.7 935.3 L1010.3 935.3 L1017.9 911.7 L1025.4 911.5 L1033.0 935.3 L1040.5 935.3 L1048.1 935.3 L1055.7 935.3 L1063.2 935.3 L1070.8 935.3 L1078.3 935.3 L1085.9 935.3 L1093.5 935.3 L1101.0 928.3 L1108.6 911.7 L1116.1 912.0 L1123.7 935.3 L1131.3 935.3 L1138.8 935.3 L1146.4 935.3 L1153.9 935.3 L1161.5 935.3 L1169.1 935.3 L1176.6 935.3 L1184.2 935.3 L1191.7 935.3 L1199.3 912.2 L1206.9 912.2 L1214.4 912.0 L1222.0 935.3 L1229.5 935.3 L1237.1 935.3 L1244.7 935.3 L1252.2 935.3 L1259.8 935.3 L1267.3 935.3 L1274.9 935.3 L1282.5 935.3 L1290.0 935.3 L1297.6 935.3 L1305.1 935.3 L1312.7 912.0 L1320.3 912.0 L1327.8 935.3 L1335.4 935.3 L1342.9 935.3 L1350.5 935.3 L1358.1 935.3 L1365.6 935.3 L1373.2 935.3 L1380.7 935.3 L1388.3 935.3 L1395.9 935.3 L1403.4 935.3 L1411.0 935.3 L1418.5 912.0 L1426.1 912.2 L1433.7 912.2 L1441.2 935.3 L1448.8 935.3 L1456.3 935.3 L1463.9 935.3 L1471.5 935.3 L1479.0 935.3 L1486.6 934.8 L1494.1 934.8 L1501.7 934.8 L1509.3 934.8 L1516.8 934.8 L1524.4 934.8 L1531.9 934.8 L1539.5 911.9 L1547.1 912.1 L1554.6 911.9 L1562.2 923.0 L1569.7 922.5 L1577.3 922.2 L1584.9 933.6 L1592.4 933.3 L1600.0 933.3 L1607.5 933.3 L1615.1 933.3 L1622.7 933.6 L1630.2 923.0 L1637.8 933.3 L1645.3 925.9 L1652.9 925.9 L1660.5 925.4 L1668.0 925.4 L1675.6 925.9 L1683.1 933.6 L1690.7 932.8 L1698.3 933.3 L1705.8 933.3 L1713.4 932.8 L1720.9 932.8 L1728.5 933.3 L1736.1 932.8 L1743.6 932.8 L1751.2 933.3 L1758.7 932.8 L1766.3 933.0 L1773.9 925.7 L1781.4 925.4 L1789.0 915.4 L1796.5 925.4 L1804.1 925.2 L1811.7 924.9 L1819.2 925.4 L1826.8 925.4 L1827 935.5 Z" fill="#cdd3de" stroke="#c3cad6" stroke-width="1"/><line x1="748" y1="905.5" x2="748" y2="936" stroke="#a7b7cc" stroke-width="1.5"/><rect x="744" y="915" width="8" height="16" rx="1" fill="#a7b7cc"/><rect x="745.5" y="919.5" width="5" height="1.6" fill="#fff"/><rect x="745.5" y="925" width="5" height="1.6" fill="#fff"/><line x1="1829" y1="905.5" x2="1829" y2="936" stroke="#a7b7cc" stroke-width="1.5"/><rect x="1825" y="915" width="8" height="16" rx="1" fill="#a7b7cc"/><rect x="1826.5" y="919.5" width="5" height="1.6" fill="#fff"/><rect x="1826.5" y="925" width="5" height="1.6" fill="#fff"/><rect x="1842" y="459" width="38" height="425.5" fill="#dce2ea"/><path d="M1842 459 L1874 459 L1849 884.5 L1842 884.5 Z" fill="#cfd6e0"/><path d="M1874 460 L1849 884" stroke="#c3cad6" stroke-width="0.8"/><line x1="1846" y1="459" x2="1876" y2="459" stroke="#fff" stroke-width="1.6"/><line x1="1846" y1="460.3" x2="1876" y2="460.3" stroke="#000" stroke-opacity="0.08" stroke-width="1"/><rect x="1855" y="455.7" width="13" height="7.3" fill="#fff" stroke="#000" stroke-opacity="0.12" stroke-width="0.8"/><rect x="1857.6" y="457.2" width="1.4" height="3.8" fill="#555"/><rect x="1863" y="457.2" width="1.4" height="3.8" fill="#555"/><line x1="1846" y1="884.5" x2="1876" y2="884.5" stroke="#fff" stroke-width="1.6"/><line x1="1846" y1="885.8" x2="1876" y2="885.8" stroke="#000" stroke-opacity="0.08" stroke-width="1"/><rect x="1855" y="881.2" width="13" height="7.3" fill="#fff" stroke="#000" stroke-opacity="0.12" stroke-width="0.8"/><rect x="1857.6" y="882.7" width="1.4" height="3.8" fill="#555"/><rect x="1863" y="882.7" width="1.4" height="3.8" fill="#555"/></svg></body></html>
